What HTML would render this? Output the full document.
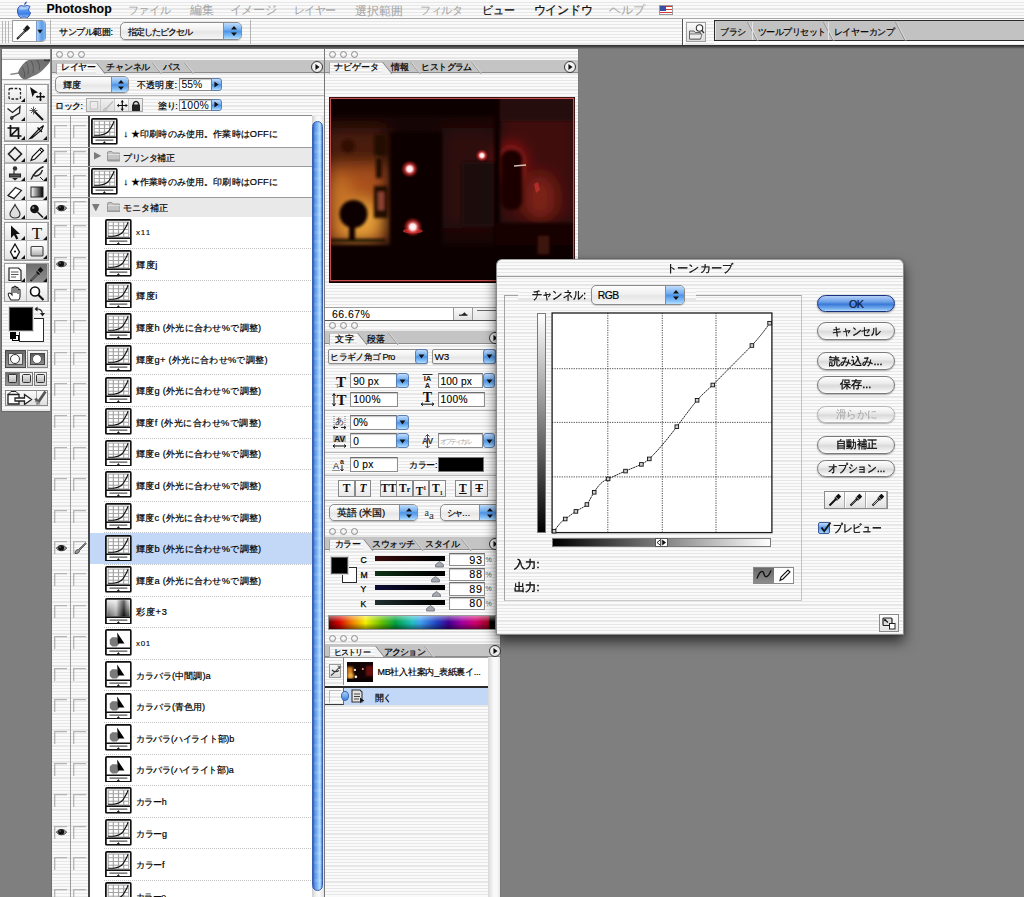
<!DOCTYPE html><html lang="ja"><head><meta charset="utf-8"><style>
*{margin:0;padding:0;box-sizing:border-box}
html,body{width:1024px;height:897px;overflow:hidden;background:#7f7f7f;font-family:"Liberation Sans",sans-serif;color:#000}
.ab{position:absolute}
.pin{background:repeating-linear-gradient(to bottom,#fafafa 0px,#fafafa 2px,#e7e7e7 2px,#e7e7e7 3.2px)}
.t{position:absolute;white-space:nowrap}
.tabs{position:absolute;background:#c4c4c4;border-bottom:1px solid #8c8c8c;overflow:hidden}
.circ{position:absolute;width:7.2px;height:7.2px;border:1.4px solid #8e8e8e;border-radius:50%;background:radial-gradient(circle at 50% 35%,#fff,#dcdcdc)}
.fld{position:absolute;background:#fff;border:1px solid #8e8e8e;border-top-color:#6e6e6e;box-shadow:inset 0 1px 1px #c8c8c8}
.pop{position:absolute;background:linear-gradient(#fdfdfd,#f0f0f0 45%,#e6e6e6 55%,#f6f6f6);border:1px solid #8c8c8c;border-radius:4px;overflow:hidden;box-shadow:0 1px 1px rgba(0,0,0,.18)}
.ar{position:absolute;right:0;top:0;bottom:0;background:linear-gradient(#c0dcfc,#76b0f0 40%,#4d94e6 52%,#8ac4fa 85%,#b8e0ff);border-left:1px solid #6a8fc5}
.ar2{position:absolute;background:linear-gradient(#c0dcfc,#76b0f0 40%,#4d94e6 52%,#8ac4fa 85%,#b8e0ff);border:1px solid #5a7fb5;border-radius:0 3px 3px 0}
.btn{position:absolute;border:1px solid #7a7a7a;border-radius:9px;background:linear-gradient(#fefefe,#ececec 40%,#dadada 55%,#f0f0f0 85%,#fff);box-shadow:0 1px 1.5px rgba(0,0,0,.3)}
.sb{position:absolute;border:1px solid #8a8a8a;background:linear-gradient(#fff,#e8e8e8);font-family:"Liberation Serif",serif;font-weight:bold;text-align:center;color:#111}
</style></head><body>
<svg width="0" height="0" style="position:absolute"><defs>
<symbol id="thC" viewBox="0 0 27 27"><rect x="0.9" y="0.9" width="25.2" height="25.2" rx="1" fill="#fff" stroke="#111" stroke-width="1.8"/>
<rect x="2.6" y="2.6" width="21.8" height="16.2" fill="#a4a4a4"/>
<g fill="#fff"><rect x="3.80" y="3.60" width="4" height="2.7"/><rect x="3.80" y="7.35" width="4" height="2.7"/><rect x="3.80" y="11.10" width="4" height="2.7"/><rect x="3.80" y="14.85" width="4" height="2.7"/><rect x="9.00" y="3.60" width="4" height="2.7"/><rect x="9.00" y="7.35" width="4" height="2.7"/><rect x="9.00" y="11.10" width="4" height="2.7"/><rect x="9.00" y="14.85" width="4" height="2.7"/><rect x="14.20" y="3.60" width="4" height="2.7"/><rect x="14.20" y="7.35" width="4" height="2.7"/><rect x="14.20" y="11.10" width="4" height="2.7"/><rect x="14.20" y="14.85" width="4" height="2.7"/><rect x="19.40" y="3.60" width="4" height="2.7"/><rect x="19.40" y="7.35" width="4" height="2.7"/><rect x="19.40" y="11.10" width="4" height="2.7"/><rect x="19.40" y="14.85" width="4" height="2.7"/></g>
<path d="M3.2 17.4 H8.5 C12 17 15.5 16.5 18 13 C20 10 22 7 23.2 3.3" stroke="#111" stroke-width="1.1" fill="none"/>
<path d="M1 19.5 H26" stroke="#111" stroke-width="1.5"/>
<path d="M4.5 22.2 H22.5" stroke="#555" stroke-width="1.2"/><path d="M11.8 25.4 L13.5 23.2 L15.2 25.4z" fill="#222"/></symbol>
<symbol id="thB" viewBox="0 0 27 27"><rect x="0.9" y="0.9" width="25.2" height="25.2" rx="1" fill="#fff" stroke="#111" stroke-width="1.8"/>
<path d="M7.2 8.2 L11.8 8.2 L14.2 10.6 L14.2 15.2 L11.8 17.6 L7.2 17.6 L4.8 15.2 L4.8 10.6z" fill="#7a7a7a"/><path d="M12.2 3.6 L19.6 14.6 L13 14.6z" fill="#000"/>
<path d="M1 19.5 H26" stroke="#111" stroke-width="1.5"/>
<path d="M4.5 22.2 H22.5" stroke="#555" stroke-width="1.2"/><path d="M11.8 25.4 L13.5 23.2 L15.2 25.4z" fill="#222"/></symbol>
<symbol id="thH" viewBox="0 0 27 27"><defs><linearGradient id="hg1" x1="0" y1="0" x2="0" y2="1"><stop offset="0" stop-color="#e0e0e0"/><stop offset="0.45" stop-color="#8a8a8a"/><stop offset="1" stop-color="#101010"/></linearGradient><linearGradient id="hg2" x1="0" y1="0" x2="1" y2="0"><stop offset="0" stop-color="#fff" stop-opacity=".3"/><stop offset=".4" stop-color="#fff" stop-opacity=".6"/><stop offset=".75" stop-color="#000" stop-opacity=".55"/><stop offset="1" stop-color="#fff" stop-opacity=".2"/></linearGradient></defs>
<rect x="0.9" y="0.9" width="25.2" height="25.2" rx="1" fill="#fff" stroke="#111" stroke-width="1.8"/>
<rect x="2.2" y="2.2" width="22.6" height="16.5" fill="url(#hg1)"/><rect x="2.2" y="2.2" width="22.6" height="16.5" fill="url(#hg2)"/>
<path d="M1 19.5 H26" stroke="#111" stroke-width="1.5"/>
<path d="M4.5 22.2 H22.5" stroke="#555" stroke-width="1.2"/><path d="M11.8 25.4 L13.5 23.2 L15.2 25.4z" fill="#222"/></symbol>
<symbol id="eye" viewBox="0 0 12 8"><path d="M0.4 4.2 C3 0.2 9 0.2 11.6 4.2 C9 8 3 8 0.4 4.2z" fill="#9a9a9a" stroke="#333" stroke-width="0.9"/><ellipse cx="5.6" cy="3.9" rx="3.3" ry="2.8" fill="#111"/><circle cx="4.4" cy="3" r="0.8" fill="#888"/></symbol>
<symbol id="lmk" viewBox="0 0 13 13"><path d="M0.7 13 V0.7 H13" stroke="#b4b4b4" stroke-width="1.3" fill="none"/></symbol>
<symbol id="fold" viewBox="0 0 14 11"><path d="M0.5 2 Q0.5 0.5 2 0.5 H5 L6.5 2 H12.5 Q13.5 2 13.5 3 V9.5 Q13.5 10.5 12.5 10.5 H1.5 Q0.5 10.5 0.5 9.5z" fill="#c4c4c4" stroke="#858585" stroke-width="0.8"/><path d="M0.8 3.6 H13.2" stroke="#e8e8e8" stroke-width="0.8"/><path d="M0.8 9.4 H13.2" stroke="#909090" stroke-width="1.2"/></symbol>
<symbol id="ud" viewBox="0 0 8 12"><path d="M1 4.6 L4 1 L7 4.6z M1 7.4 L4 11 L7 7.4z" fill="#111"/></symbol>
<symbol id="dn" viewBox="0 0 8 6"><path d="M0.5 0.5 L7.5 0.5 L4 5.5z" fill="#111"/></symbol>
<symbol id="rt" viewBox="0 0 6 7"><path d="M0.5 0 L5.5 3.5 L0.5 7z" fill="#111"/></symbol>
</defs></svg>
<div class="ab pin" style="left:0;top:0;width:1024px;height:19px"></div>
<div class="ab" style="left:0;top:18.2px;width:1024px;height:1px;background:#a8a8a8"></div>
<svg class="ab" style="left:16.5px;top:0.5px" width="14" height="17.5" viewBox="0 0 14 17.5"><defs><linearGradient id="ap" x1="0" y1="0" x2="0" y2="1"><stop offset="0" stop-color="#c0dcff"/><stop offset="0.4" stop-color="#5a9af0"/><stop offset="0.7" stop-color="#3a7ee6"/><stop offset="1" stop-color="#9ccaff"/></linearGradient></defs><path d="M9.6 0.6 C10.2 0.8 9.2 3.6 7.3 4.2 C7 3 8 1 9.6 0.6z" fill="#2a4eb0"/><path d="M7 5.2 C8 5.2 9 4.4 10.5 4.5 C11.6 4.6 12.5 5 13.2 6 C11 7.4 11.3 10.6 13.6 11.6 C13 13.6 11.5 16.6 10 16.6 C9 16.6 8.5 16 7 16 C5.5 16 5 16.6 4 16.6 C2.2 16.6 0.5 12.8 0.5 10 C0.5 7 2.3 4.6 4.2 4.6 C5.3 4.6 6 5.2 7 5.2z" fill="url(#ap)" stroke="#2244a8" stroke-width="0.9"/><path d="M2.2 8.5 C3 6.5 5 6 7 6.5 C9 7 10.5 6.5 11.5 6.8 C10.5 8.5 6 9 2.2 8.5z" fill="#fff" opacity="0.35"/></svg>
<div class="t" style="left:46.5px;top:2px;font-size:12.3px;line-height:15px;-webkit-text-stroke:0.1px currentColor;letter-spacing:0.12px;font-weight:bold">Photoshop</div>
<div class="t" style="left:127.5px;top:2.5px;font-size:11.43px;line-height:15px;-webkit-text-stroke:0.05px currentColor;letter-spacing:-0.23px;color:#a4a4a4">ファイル</div>
<div class="t" style="left:190.3px;top:2.5px;font-size:11.53px;line-height:15px;-webkit-text-stroke:0.05px currentColor;letter-spacing:-0.16px;color:#a4a4a4">編集</div>
<div class="t" style="left:229.5px;top:2.5px;font-size:11.58px;line-height:15px;-webkit-text-stroke:0.05px currentColor;letter-spacing:-0.04px;color:#a4a4a4">イメージ</div>
<div class="t" style="left:293.5px;top:2.5px;font-size:11.31px;line-height:15px;-webkit-text-stroke:0.05px currentColor;letter-spacing:-0.40px;color:#a4a4a4">レイヤー</div>
<div class="t" style="left:354.9px;top:2.5px;font-size:11.6px;line-height:15px;-webkit-text-stroke:0.05px currentColor;letter-spacing:0.20px;color:#a4a4a4">選択範囲</div>
<div class="t" style="left:419.8px;top:2.5px;font-size:11.39px;line-height:15px;-webkit-text-stroke:0.05px currentColor;letter-spacing:-0.28px;color:#a4a4a4">フィルタ</div>
<div class="t" style="left:482.4px;top:2.5px;font-size:11.42px;line-height:15px;-webkit-text-stroke:0.25px currentColor;letter-spacing:-0.27px;color:#111">ビュー</div>
<div class="t" style="left:533.5px;top:2.5px;font-size:11.5px;line-height:15px;-webkit-text-stroke:0.25px currentColor;letter-spacing:-0.12px;color:#111">ウインドウ</div>
<div class="t" style="left:608.8px;top:2.5px;font-size:11.55px;line-height:15px;-webkit-text-stroke:0.05px currentColor;letter-spacing:-0.07px;color:#a4a4a4">ヘルプ</div>
<div class="ab" style="left:658.5px;top:4.8px;width:14px;height:10.5px;background:repeating-linear-gradient(#d43a3a 0,#d43a3a 1.5px,#fff 1.5px,#fff 3px);border:0.5px solid #999"><div class="ab" style="left:0;top:0;width:6.5px;height:5.5px;background:#3a4ea8"></div></div>
<div class="ab pin" style="left:0;top:19.2px;width:1024px;height:25.5px"></div>
<div class="ab" style="left:0;top:44.5px;width:1024px;height:4.5px;background:linear-gradient(#2a2a2a,#4a4a4a 45%,#6a6a6a 80%,#7f7f7f)"></div>
<div class="ab" style="left:2px;top:21px;width:8px;height:22px;background:repeating-linear-gradient(to right,#b8b8b8 0,#b8b8b8 1px,transparent 1px,transparent 3px)"></div>
<div class="ab" style="left:12px;top:19.8px;width:34px;height:22.6px;background:#fff;border:1px solid #9a9a9a;border-radius:0 4px 4px 0"></div>
<div class="ab" style="left:35.5px;top:20.8px;width:9.5px;height:20.6px;background:linear-gradient(to right,#a8d0fa,#5e9ce8 60%,#7ab4f4);border-radius:0 3px 3px 0;border-left:1px solid #7a9ccc"></div>
<svg class="ab" style="left:37px;top:28.5px" width="6" height="5"><use href="#dn"/></svg>
<svg class="ab" style="left:15px;top:22.5px" width="17" height="17" viewBox="0 0 17 17"><path d="M2.5 15.5 L10.5 7.5" stroke="#1a1a1a" stroke-width="1.8" stroke-linecap="round"/><path d="M3.4 14.4 L9.8 8" stroke="#e8e8e8" stroke-width="0.6"/><path d="M9.2 5.2 L12.2 2 L15.2 5 L12 8.2z" fill="#1a1a1a"/><path d="M8.5 6 L11.2 8.8" stroke="#1a1a1a" stroke-width="1.4"/></svg>
<div class="ab" style="left:50.3px;top:20px;width:1px;height:24px;background:#b4b4b4"></div>
<div class="t" style="left:59.2px;top:25.5px;font-size:9.19px;line-height:12px;-webkit-text-stroke:0.2px currentColor;letter-spacing:-0.43px;">サンプル範囲:</div>
<div class="pop" style="left:119.9px;top:22.3px;width:122.5px;height:17.6px;border-radius:5px"><div class="ar" style="width:18px"></div></div>
<svg class="ab" style="left:229.5px;top:25px" width="8" height="12"><use href="#ud"/></svg>
<div class="t" style="left:127.5px;top:25.5px;font-size:8.85px;line-height:12px;-webkit-text-stroke:0.2px currentColor;letter-spacing:-0.88px;">指定したピクセル</div>
<div class="ab" style="left:250px;top:20px;width:1px;height:24px;background:#b4b4b4"></div>
<div class="ab" style="left:682px;top:19.2px;width:1px;height:25.5px;background:#505050"></div>
<div class="ab" style="left:683px;top:19.2px;width:1.5px;height:25.5px;background:#fcfcfc"></div>
<div class="ab" style="left:686px;top:21.8px;width:19.5px;height:20.5px;background:linear-gradient(#fafafa,#dcdcdc);border:1px solid #a0a0a0"></div>
<svg class="ab" style="left:687.5px;top:23px" width="17" height="18" viewBox="0 0 17 18"><path d="M1.5 8 H6 L7.2 9.5 H12.5 V16 H1.5z" fill="#d8d8d8" stroke="#555" stroke-width="0.9"/><path d="M1.5 11 H14 L12.5 16 H1.5z" fill="#eee" stroke="#555" stroke-width="0.8"/><circle cx="11.5" cy="5" r="3.2" fill="#fff" stroke="#333" stroke-width="1.1"/><path d="M13.6 7.3 L16 10" stroke="#333" stroke-width="1.4"/></svg>
<div class="ab" style="left:713.5px;top:20.2px;width:311px;height:21px;background:#c2c2c2;border-top:1.2px solid #2a2a2a;border-left:1.2px solid #2a2a2a;border-bottom:1.2px solid #2a2a2a"></div>
<div class="ab" style="left:713.5px;top:41.2px;width:311px;height:3.3px;background:#fcfcfc"></div>
<svg class="ab" style="left:747px;top:22px" width="12" height="19"><path d="M0.5 0 L10 18.5" stroke="#8a8a8a" stroke-width="1"/><path d="M1.5 0 L11 18.5" stroke="#e0e0e0" stroke-width="0.8"/></svg>
<div class="t" style="left:719.6px;top:25.5px;font-size:9.15px;line-height:12px;-webkit-text-stroke:0.2px currentColor;letter-spacing:-0.08px;">ブラシ</div>
<svg class="ab" style="left:822.8px;top:22px" width="12" height="19"><path d="M0.5 0 L10 18.5" stroke="#8a8a8a" stroke-width="1"/><path d="M1.5 0 L11 18.5" stroke="#e0e0e0" stroke-width="0.8"/></svg>
<div class="t" style="left:758px;top:25.5px;font-size:8.66px;line-height:12px;-webkit-text-stroke:0.2px currentColor;letter-spacing:-0.57px;">ツールプリセット</div>
<svg class="ab" style="left:895px;top:22px" width="12" height="19"><path d="M0.5 0 L10 18.5" stroke="#8a8a8a" stroke-width="1"/><path d="M1.5 0 L11 18.5" stroke="#e0e0e0" stroke-width="0.8"/></svg>
<div class="t" style="left:833.8px;top:25.5px;font-size:8.93px;line-height:12px;-webkit-text-stroke:0.2px currentColor;letter-spacing:-0.31px;">レイヤーカンプ</div>
<div class="ab" style="left:715px;top:22px;width:1px;height:18px;background:#e4e4e4"></div>
<div class="ab" style="left:752px;top:22px;width:1px;height:18px;background:#e4e4e4"></div>
<div class="ab" style="left:828px;top:22px;width:1px;height:18px;background:#e4e4e4"></div>
<div class="ab pin" style="left:1.2px;top:49px;width:49.6px;height:363px;border-left:1px solid #6a6a6a;border-right:1px solid #8a8a8a;border-bottom:1px solid #6a6a6a"></div>
<div class="ab" style="left:2.2px;top:59px;width:47.6px;height:21px;background:#fff;border-top:1px solid #b0b0b0;border-bottom:1px solid #b0b0b0"></div>
<svg class="ab" style="left:0px;top:55px" width="52" height="27" viewBox="0 0 52 27"><defs><linearGradient id="fth" x1="0" y1="1" x2="1" y2="0"><stop offset="0" stop-color="#6a6a6a"/><stop offset="0.5" stop-color="#7a7a7a"/><stop offset="1" stop-color="#6a6a6a"/></linearGradient><filter id="fb"><feGaussianBlur stdDeviation="0.35"/></filter></defs>
<g filter="url(#fb)"><path d="M11 19.2 L19.5 18" stroke="#8a8a8a" stroke-width="1.6" stroke-linecap="round"/>
<path d="M18 17.5 C20 12 24 7 28.4 5 C36 4 44 4.5 50.2 4.5 L50.2 6 C49 8 48.5 9.5 47.7 9.8 C45 13 42 16 39.6 17.8 C36 20 34 21 31.5 21.8 C29 23 27 24.5 24.9 24.4 C22 24 20 22 18 17.5z" fill="url(#fth)"/>
<path d="M26 7 C28 10 29 14 28 19 M31 5.5 C33 9 34 13 33 18 M22 12 C24 15 25 18 24.5 22 M37 5 C39 8 40 11 39.5 15" stroke="#4a4a4a" stroke-width="1" fill="none" opacity="0.7"/>
<path d="M44 5 C47 6 49 5.5 50 5" stroke="#3a3a3a" stroke-width="1.5" fill="none"/></g></svg>
<div class="ab" style="left:4.3px;top:83.8px;width:44.400000000000006px;height:57.9px;border:1px solid #9c9c9c;background:#b4b4b4"></div>
<div class="ab" style="left:5.3px;top:84.8px;width:20.6px;height:17.9px;background:linear-gradient(#fdfdfd,#e6e6e6)"></div>
<div class="ab" style="left:26.900000000000002px;top:84.8px;width:20.6px;height:17.9px;background:linear-gradient(#fdfdfd,#e6e6e6)"></div>
<div class="ab" style="left:5.3px;top:103.69999999999999px;width:20.6px;height:17.9px;background:linear-gradient(#fdfdfd,#e6e6e6)"></div>
<div class="ab" style="left:26.900000000000002px;top:103.69999999999999px;width:20.6px;height:17.9px;background:linear-gradient(#fdfdfd,#e6e6e6)"></div>
<div class="ab" style="left:5.3px;top:122.6px;width:20.6px;height:17.9px;background:linear-gradient(#fdfdfd,#e6e6e6)"></div>
<div class="ab" style="left:26.900000000000002px;top:122.6px;width:20.6px;height:17.9px;background:linear-gradient(#fdfdfd,#e6e6e6)"></div>
<div class="ab" style="left:4.3px;top:143.6px;width:44.400000000000006px;height:76.8px;border:1px solid #9c9c9c;background:#b4b4b4"></div>
<div class="ab" style="left:5.3px;top:144.6px;width:20.6px;height:17.9px;background:linear-gradient(#fdfdfd,#e6e6e6)"></div>
<div class="ab" style="left:26.900000000000002px;top:144.6px;width:20.6px;height:17.9px;background:linear-gradient(#fdfdfd,#e6e6e6)"></div>
<div class="ab" style="left:5.3px;top:163.5px;width:20.6px;height:17.9px;background:linear-gradient(#fdfdfd,#e6e6e6)"></div>
<div class="ab" style="left:26.900000000000002px;top:163.5px;width:20.6px;height:17.9px;background:linear-gradient(#fdfdfd,#e6e6e6)"></div>
<div class="ab" style="left:5.3px;top:182.39999999999998px;width:20.6px;height:17.9px;background:linear-gradient(#fdfdfd,#e6e6e6)"></div>
<div class="ab" style="left:26.900000000000002px;top:182.39999999999998px;width:20.6px;height:17.9px;background:linear-gradient(#fdfdfd,#e6e6e6)"></div>
<div class="ab" style="left:5.3px;top:201.29999999999998px;width:20.6px;height:17.9px;background:linear-gradient(#fdfdfd,#e6e6e6)"></div>
<div class="ab" style="left:26.900000000000002px;top:201.29999999999998px;width:20.6px;height:17.9px;background:linear-gradient(#fdfdfd,#e6e6e6)"></div>
<div class="ab" style="left:4.3px;top:221.5px;width:44.400000000000006px;height:39.0px;border:1px solid #9c9c9c;background:#b4b4b4"></div>
<div class="ab" style="left:5.3px;top:222.5px;width:20.6px;height:17.9px;background:linear-gradient(#fdfdfd,#e6e6e6)"></div>
<div class="ab" style="left:26.900000000000002px;top:222.5px;width:20.6px;height:17.9px;background:linear-gradient(#fdfdfd,#e6e6e6)"></div>
<div class="ab" style="left:5.3px;top:241.4px;width:20.6px;height:17.9px;background:linear-gradient(#fdfdfd,#e6e6e6)"></div>
<div class="ab" style="left:26.900000000000002px;top:241.4px;width:20.6px;height:17.9px;background:linear-gradient(#fdfdfd,#e6e6e6)"></div>
<div class="ab" style="left:4.3px;top:263.4px;width:44.400000000000006px;height:39.0px;border:1px solid #9c9c9c;background:#b4b4b4"></div>
<div class="ab" style="left:5.3px;top:264.4px;width:20.6px;height:17.9px;background:linear-gradient(#fdfdfd,#e6e6e6)"></div>
<div class="ab" style="left:26.900000000000002px;top:264.4px;width:20.6px;height:17.9px;background:linear-gradient(#fdfdfd,#e6e6e6)"></div>
<div class="ab" style="left:5.3px;top:283.29999999999995px;width:20.6px;height:17.9px;background:linear-gradient(#fdfdfd,#e6e6e6)"></div>
<div class="ab" style="left:26.900000000000002px;top:283.29999999999995px;width:20.6px;height:17.9px;background:linear-gradient(#fdfdfd,#e6e6e6)"></div>
<div class="ab" style="left:26.3px;top:264.4px;width:20.6px;height:17.9px;background:linear-gradient(#6e6e6e,#8e8e8e)"></div>
<svg class="ab" style="left:21.400000000000002px;top:98.19999999999999px" width="4" height="4"><path d="M4 0 L4 4 L0 4z" fill="#111"/></svg>
<svg class="ab" style="left:21.400000000000002px;top:117.1px" width="4" height="4"><path d="M4 0 L4 4 L0 4z" fill="#111"/></svg>
<svg class="ab" style="left:21.400000000000002px;top:136.0px" width="4" height="4"><path d="M4 0 L4 4 L0 4z" fill="#111"/></svg>
<svg class="ab" style="left:43.0px;top:136.0px" width="4" height="4"><path d="M4 0 L4 4 L0 4z" fill="#111"/></svg>
<svg class="ab" style="left:21.400000000000002px;top:158.0px" width="4" height="4"><path d="M4 0 L4 4 L0 4z" fill="#111"/></svg>
<svg class="ab" style="left:43.0px;top:158.0px" width="4" height="4"><path d="M4 0 L4 4 L0 4z" fill="#111"/></svg>
<svg class="ab" style="left:21.400000000000002px;top:176.9px" width="4" height="4"><path d="M4 0 L4 4 L0 4z" fill="#111"/></svg>
<svg class="ab" style="left:43.0px;top:176.9px" width="4" height="4"><path d="M4 0 L4 4 L0 4z" fill="#111"/></svg>
<svg class="ab" style="left:21.400000000000002px;top:195.79999999999998px" width="4" height="4"><path d="M4 0 L4 4 L0 4z" fill="#111"/></svg>
<svg class="ab" style="left:43.0px;top:195.79999999999998px" width="4" height="4"><path d="M4 0 L4 4 L0 4z" fill="#111"/></svg>
<svg class="ab" style="left:21.400000000000002px;top:214.7px" width="4" height="4"><path d="M4 0 L4 4 L0 4z" fill="#111"/></svg>
<svg class="ab" style="left:43.0px;top:214.7px" width="4" height="4"><path d="M4 0 L4 4 L0 4z" fill="#111"/></svg>
<svg class="ab" style="left:21.400000000000002px;top:235.9px" width="4" height="4"><path d="M4 0 L4 4 L0 4z" fill="#111"/></svg>
<svg class="ab" style="left:43.0px;top:235.9px" width="4" height="4"><path d="M4 0 L4 4 L0 4z" fill="#111"/></svg>
<svg class="ab" style="left:21.400000000000002px;top:254.8px" width="4" height="4"><path d="M4 0 L4 4 L0 4z" fill="#111"/></svg>
<svg class="ab" style="left:43.0px;top:254.8px" width="4" height="4"><path d="M4 0 L4 4 L0 4z" fill="#111"/></svg>
<svg class="ab" style="left:21.400000000000002px;top:277.79999999999995px" width="4" height="4"><path d="M4 0 L4 4 L0 4z" fill="#111"/></svg>
<svg class="ab" style="left:43.0px;top:277.79999999999995px" width="4" height="4"><path d="M4 0 L4 4 L0 4z" fill="#111"/></svg>
<svg class="ab" style="left:6.2px;top:86.3px" width="18" height="16" viewBox="0 0 18 16"><rect x="3" y="2.5" width="11.5" height="10.5" rx="1.5" fill="none" stroke="#222" stroke-width="1.3" stroke-dasharray="2.6 1.6"/></svg>
<svg class="ab" style="left:27.8px;top:86.3px" width="18" height="16" viewBox="0 0 18 16"><path d="M2 1 L10 6.5 L6.5 7.3 L4.5 11z" fill="#111"/><path d="M12.5 6.5 V15 M8.3 10.8 H16.7" stroke="#111" stroke-width="1.4"/><path d="M11 8 L12.5 6.3 L14 8 M11 13.5 L12.5 15.2 L14 13.5 M9.8 9.3 L8.1 10.8 L9.8 12.3 M15.2 9.3 L16.9 10.8 L15.2 12.3" fill="#111"/></svg>
<svg class="ab" style="left:6.2px;top:105.19999999999999px" width="18" height="16" viewBox="0 0 18 16"><path d="M1.5 3.5 L6.5 7.5 L14 1.5 L13.5 8 L6 12.5 L5.5 15" fill="none" stroke="#222" stroke-width="1.3"/><circle cx="5.8" cy="12.8" r="1.4" fill="none" stroke="#222" stroke-width="1"/></svg>
<svg class="ab" style="left:27.8px;top:105.19999999999999px" width="18" height="16" viewBox="0 0 18 16"><path d="M6.5 6.5 L15 15" stroke="#111" stroke-width="2"/><path d="M3 3 L8 8 M8 3 L3 8 M5.5 1.5 V9.5 M1.5 5.5 H9.5" stroke="#333" stroke-width="0.8"/></svg>
<svg class="ab" style="left:6.2px;top:124.1px" width="18" height="16" viewBox="0 0 18 16"><path d="M4.5 1 V12 H15.5 M1.5 4 H12.5 V15 M4.5 12 L12.5 4" fill="none" stroke="#111" stroke-width="1.7"/></svg>
<svg class="ab" style="left:27.8px;top:124.1px" width="18" height="16" viewBox="0 0 18 16"><path d="M2 14.5 L11 5 L15.5 1.5 L13.5 6 L4 14z" fill="#fff" stroke="#111" stroke-width="1.2"/><path d="M9.5 3.5 L14 8" stroke="#111" stroke-width="1.2"/></svg>
<svg class="ab" style="left:6.2px;top:146.1px" width="18" height="16" viewBox="0 0 18 16"><path d="M9 1.5 L15.5 8 L9 14.5 L2.5 8z" fill="#eee" stroke="#222" stroke-width="1.6"/></svg>
<svg class="ab" style="left:27.8px;top:146.1px" width="18" height="16" viewBox="0 0 18 16"><path d="M3 14.5 L4.5 10.5 L13 2 L15.5 4.5 L7 13z" fill="#fff" stroke="#111" stroke-width="1.2"/><path d="M11.5 3.5 L14 6" stroke="#111"/></svg>
<svg class="ab" style="left:6.2px;top:165.0px" width="18" height="16" viewBox="0 0 18 16"><circle cx="9" cy="3.5" r="2.2" fill="#333"/><path d="M8 5.5 V8.5 M3.5 9 H14.5 V12 H3.5z" fill="#555" stroke="#222" stroke-width="1.1"/><path d="M6 13 L9 15.5 L12 13z" fill="#222"/></svg>
<svg class="ab" style="left:27.8px;top:165.0px" width="18" height="16" viewBox="0 0 18 16"><path d="M3 14.5 C6 8 10 4 15.5 1.5 M4.5 10 C9 12.5 13 9.5 14.5 5" fill="none" stroke="#222" stroke-width="1.4"/><path d="M12 12 L15 15" stroke="#222" stroke-width="1"/></svg>
<svg class="ab" style="left:6.2px;top:183.89999999999998px" width="18" height="16" viewBox="0 0 18 16"><path d="M2 11.5 L9.5 3.5 L15.5 6.5 L8 14.5z" fill="#fff" stroke="#222" stroke-width="1.2"/><path d="M2 11.5 L8 14.5 L8 15.5" fill="none" stroke="#222"/></svg>
<svg class="ab" style="left:27.8px;top:183.89999999999998px" width="18" height="16" viewBox="0 0 18 16"><defs><linearGradient id="gr1"><stop offset="0" stop-color="#fff"/><stop offset="1" stop-color="#000"/></linearGradient></defs><rect x="3" y="3" width="12" height="10" fill="url(#gr1)" stroke="#222" stroke-width="1"/></svg>
<svg class="ab" style="left:6.2px;top:202.79999999999998px" width="18" height="16" viewBox="0 0 18 16"><path d="M9 1.5 C11 6 14 8 14 11 C14 13.5 12 15 9 15 C6 15 4 13.5 4 11 C4 8 7 6 9 1.5z" fill="#ddd" stroke="#333" stroke-width="1.1"/></svg>
<svg class="ab" style="left:27.8px;top:202.79999999999998px" width="18" height="16" viewBox="0 0 18 16"><circle cx="6.5" cy="6" r="4.3" fill="#111"/><circle cx="5.2" cy="4.8" r="1.2" fill="#888"/><path d="M9.5 9 L15 14.5" stroke="#111" stroke-width="1.5"/></svg>
<svg class="ab" style="left:6.2px;top:224.0px" width="18" height="16" viewBox="0 0 18 16"><path d="M5 1.5 L5 14 L8 11 L10.3 15.5 L12.3 14.5 L10 10 L14 10z" fill="#111"/></svg>
<svg class="ab" style="left:27.8px;top:224.0px" width="18" height="16" viewBox="0 0 18 16"><text x="9" y="14.5" font-family="Liberation Serif" font-size="17" text-anchor="middle" fill="#111">T</text></svg>
<svg class="ab" style="left:6.2px;top:242.9px" width="18" height="16" viewBox="0 0 18 16"><path d="M9 1 L13.5 9 L10.5 14.5 H7.5 L4.5 9z" fill="#fff" stroke="#111" stroke-width="1.3"/><circle cx="9" cy="8.5" r="1.1" fill="#111"/><path d="M7 14.5 H11 V16 H7z" fill="#111"/></svg>
<svg class="ab" style="left:27.8px;top:242.9px" width="18" height="16" viewBox="0 0 18 16"><defs><linearGradient id="rg1" x1="0" y1="0" x2="0" y2="1"><stop offset="0" stop-color="#fff"/><stop offset="1" stop-color="#aaa"/></linearGradient></defs><rect x="3" y="3.5" width="12" height="9.5" rx="1" fill="url(#rg1)" stroke="#444" stroke-width="1.1"/></svg>
<svg class="ab" style="left:6.2px;top:265.9px" width="18" height="16" viewBox="0 0 18 16"><path d="M3 2 H12.5 L15 4.5 V14.5 H3z" fill="#fff" stroke="#222" stroke-width="1.2"/><path d="M5 6 H12.5 M5 8.5 H12.5 M5 11 H10" stroke="#555" stroke-width="1"/></svg>
<svg class="ab" style="left:27.8px;top:265.9px" width="18" height="16" viewBox="0 0 18 16"><path d="M2.5 15 L10.5 7" stroke="#111" stroke-width="1.8"/><path d="M3.3 14.2 L9.8 7.7" stroke="#fff" stroke-width="0.6"/><path d="M9.5 4 L12.5 1 L15.5 4 L12.5 7z" fill="#111"/><path d="M8.5 5.5 L11.5 8.5" stroke="#111" stroke-width="1.4"/></svg>
<svg class="ab" style="left:6.2px;top:284.79999999999995px" width="18" height="16" viewBox="0 0 18 16"><path d="M5 15 C3 12 1.5 9.5 2.5 8.3 C3.5 7.3 5 8.8 6 10 V3.2 C6 2 8 2 8 3.2 V8 V2.2 C8 1 10 1 10 2.2 V8 V3 C10 2 12 2 12 3 V9 V5 C12 4 14 4 14 5 V11 C14 13 13 15 12 15z" fill="#fff" stroke="#222" stroke-width="1.1"/></svg>
<svg class="ab" style="left:27.8px;top:284.79999999999995px" width="18" height="16" viewBox="0 0 18 16"><circle cx="7" cy="6.5" r="4.5" fill="#fff" stroke="#111" stroke-width="1.6"/><path d="M10.2 9.8 L15.5 15" stroke="#111" stroke-width="2.2"/></svg>
<div class="ab" style="left:19px;top:318px;width:25px;height:24px;background:#fff;border:1.2px solid #2a2a2a"></div>
<div class="ab" style="left:8.5px;top:307px;width:24px;height:23.5px;background:#000;border:1.5px solid #5a5a5a;box-shadow:0 0 0 1px #e0e0e0"></div>
<div class="ab" style="left:12px;top:334.5px;width:6.5px;height:6.5px;border:1px solid #000;background:#fff"></div><div class="ab" style="left:9.5px;top:332px;width:6.5px;height:6.5px;background:#000"></div>
<svg class="ab" style="left:34px;top:306px" width="11" height="11"><path d="M2.5 3 Q8 2.5 8.5 8" fill="none" stroke="#222" stroke-width="1.1"/><path d="M0.5 3 L3.5 0.5 L3.5 5.5z M8.5 10.5 L6 7 L11 7z" fill="#222"/></svg>
<div class="ab" style="left:5px;top:350px;width:20.5px;height:17.5px;background:linear-gradient(#6a6a6a,#9a9a9a);border:1px solid #4a4a4a"></div><div class="ab" style="left:7.5px;top:352.5px;width:15.5px;height:12.5px;background:linear-gradient(#f4f4f4,#d8d8d8);border:1px solid #555"></div><div class="ab" style="left:10.3px;top:353.5px;width:10px;height:10px;border-radius:50%;background:#fff;border:1.2px solid #333"></div>
<div class="ab" style="left:27px;top:350px;width:20.5px;height:17.5px;background:linear-gradient(#f4f4f4,#d4d4d4);border:1px solid #8a8a8a"></div><div class="ab" style="left:29.5px;top:352.5px;width:15.5px;height:12.5px;background:linear-gradient(#5a5a5a,#8a8a8a);border:1px solid #444"></div><div class="ab" style="left:32.3px;top:353.5px;width:10px;height:10px;border-radius:50%;background:#fff;border:1px solid #555"></div>
<div class="ab" style="left:5px;top:371.5px;width:13.8px;height:14px;background:linear-gradient(#6a6a6a,#9a9a9a);border:1px solid #7a7a7a"></div><div class="ab" style="left:7.5px;top:374.3px;width:9px;height:8.5px;border:1px solid #333;background:linear-gradient(#e8e8e8,#bbb);border-radius:1.5px"></div>
<div class="ab" style="left:19.3px;top:371.5px;width:13.8px;height:14px;background:linear-gradient(#f6f6f6,#d4d4d4);border:1px solid #7a7a7a"></div><div class="ab" style="left:21.8px;top:374.3px;width:9px;height:8.5px;border:1px solid #333;background:linear-gradient(#e8e8e8,#bbb);border-radius:1.5px"></div>
<div class="ab" style="left:33.6px;top:371.5px;width:13.8px;height:14px;background:linear-gradient(#f6f6f6,#d4d4d4);border:1px solid #7a7a7a"></div><div class="ab" style="left:36.1px;top:374.3px;width:9px;height:8.5px;border:1px solid #333;background:linear-gradient(#e8e8e8,#bbb);border-radius:1.5px"></div>
<div class="ab" style="left:5px;top:389.5px;width:42.5px;height:16px;background:linear-gradient(#fafafa,#e0e0e0);border:1px solid #8a8a8a"></div>
<div class="ab" style="left:35.5px;top:390.5px;width:1px;height:14px;background:#aaa"></div>
<svg class="ab" style="left:7px;top:390px" width="40" height="15" viewBox="0 0 40 15"><path d="M1 4.5 H12 V14 H1z" fill="#fff" stroke="#222" stroke-width="1.3"/><path d="M1 4.5 L4 1.5 H9 L12 4.5" fill="none" stroke="#222" stroke-width="1"/><path d="M8 8 H17.5 V4.5 L24.5 9.5 L17.5 14.5 V11 H8z" fill="#fff" stroke="#222" stroke-width="1.3"/><path d="M28.5 8.5 L31 12.5 L38.5 1.5" fill="none" stroke="#555" stroke-width="2.8"/><path d="M28 11 L33 14" stroke="#999" stroke-width="1.5"/></svg>
<div class="ab pin" style="left:51px;top:49px;width:274px;height:848px;border-left:1px solid #6e6e6e"></div>
<div class="ab" style="left:323.8px;top:49px;width:1.6px;height:848px;background:#767676"></div>
<div class="circ" style="left:55.5px;top:50.8px"></div>
<div class="circ" style="left:66.7px;top:50.8px"></div>
<div class="circ" style="left:77.9px;top:50.8px"></div>
<div class="ab" style="left:52px;top:60px;width:272.4px;height:1px;background:#a6a6a6"></div>
<div class="tabs" style="left:52px;top:60.4px;width:272.4px;height:12.6px"></div>
<div class="ab pin" style="left:55.5px;top:62.699999999999996px;width:41.0px;height:11.299999999999999px;border-left:1px solid #a8a8a8;border-top:1px solid #c8c8c8"></div>
<svg class="ab" style="left:96.0px;top:62.699999999999996px" width="11.072" height="11.299999999999999"><path d="M0 0 L9.072 11.299999999999999 L0 11.299999999999999z" fill="#f2f2f2"/><path d="M0.5 0 L9.572 11.299999999999999" stroke="#8a8a8a" stroke-width="1"/></svg>
<div class="t" style="left:61px;top:62.1px;font-size:8.81px;line-height:11.6px;-webkit-text-stroke:0.22px currentColor;letter-spacing:-0.49px;">レイヤー</div>
<svg class="ab" style="left:152.0px;top:62.699999999999996px" width="11.072" height="11.299999999999999"><path d="M0.5 0 L9.572 11.299999999999999" stroke="#9a9a9a" stroke-width="1"/><path d="M1.5 0 L10.572 11.299999999999999" stroke="#dedede" stroke-width="0.8"/></svg>
<div class="t" style="left:106px;top:62.1px;font-size:9.08px;line-height:11.6px;-webkit-text-stroke:0.22px currentColor;letter-spacing:-0.15px;">チャンネル</div>
<svg class="ab" style="left:183.5px;top:62.699999999999996px" width="11.072" height="11.299999999999999"><path d="M0.5 0 L9.572 11.299999999999999" stroke="#9a9a9a" stroke-width="1"/><path d="M1.5 0 L10.572 11.299999999999999" stroke="#dedede" stroke-width="0.8"/></svg>
<div class="t" style="left:162.7px;top:62.1px;font-size:9.2px;line-height:11.6px;-webkit-text-stroke:0.22px currentColor;letter-spacing:0.80px;">パス</div>
<div class="ab" style="left:310.5px;top:60.900000000000006px;width:12.5px;height:12.5px;border-radius:50%;background:radial-gradient(circle at 50% 40%,#fff,#dedede);border:1.3px solid #3a3a3a"></div>
<svg class="ab" style="left:314.9px;top:63.900000000000006px" width="5" height="6"><use href="#rt"/></svg>
<div class="pop" style="left:55.3px;top:76.2px;width:74.2px;height:17.2px;border-radius:5px"><div class="ar" style="width:17.6px"></div></div>
<svg class="ab" style="left:117px;top:79px" width="8" height="12"><use href="#ud"/></svg>
<div class="t" style="left:62.5px;top:79px;font-size:9.4px;line-height:12px;-webkit-text-stroke:0.2px currentColor;letter-spacing:0.80px;">輝度</div>
<div class="t" style="left:136.5px;top:79px;font-size:9.4px;line-height:12px;-webkit-text-stroke:0.2px currentColor;letter-spacing:0.47px;">不透明度:</div>
<div class="fld" style="left:179.2px;top:77.9px;width:32.5px;height:12.8px"></div>
<div class="t" style="left:181.5px;top:78px;font-size:10.4px;line-height:13px;-webkit-text-stroke:0.03px currentColor;letter-spacing:0.00px;">55%</div>
<div class="ar2" style="left:211.2px;top:77.9px;width:10.7px;height:12.8px"></div><svg class="ab" style="left:214.3px;top:80.8px" width="5" height="7"><use href="#rt"/></svg>
<div class="ab" style="left:52px;top:94.6px;width:272.4px;height:1px;background:#b6b6b6"></div>
<div class="t" style="left:55.3px;top:99.5px;font-size:8.77px;line-height:12px;-webkit-text-stroke:0.2px currentColor;letter-spacing:-0.61px;">ロック:</div>
<div class="ab" style="left:86px;top:98.1px;width:56.8px;height:14.1px;background:#c8c8c8;border:1px solid #a8a8a8"></div>
<div class="ab" style="left:86.8px;top:98.9px;width:13.3px;height:12.5px;background:linear-gradient(#f0f0f0,#dedede)"></div>
<div class="ab" style="left:100.89999999999999px;top:98.9px;width:13.3px;height:12.5px;background:linear-gradient(#f0f0f0,#dedede)"></div>
<div class="ab" style="left:115.0px;top:98.9px;width:13.3px;height:12.5px;background:linear-gradient(#fdfdfd,#e8e8e8)"></div>
<div class="ab" style="left:129.1px;top:98.9px;width:13.3px;height:12.5px;background:linear-gradient(#f0f0f0,#dedede)"></div>
<svg class="ab" style="left:86.8px;top:98.9px" width="56" height="13" viewBox="0 0 56 13"><rect x="3.2" y="2.5" width="7.5" height="7.5" fill="#eee" stroke="#b8b8b8" stroke-width="0.9"/><path d="M4 3.5 L10 9.5 M10 3.5 L4 9.5" stroke="#ddd" stroke-width="0.6"/><path d="M16.5 12 C16.5 10 17.5 9 19 9 L25.5 2.5 L26 3 L20 9.5 C20 11.5 18.5 12.5 16.5 12z" fill="#ccc" stroke="#aaa" stroke-width="0.6"/><path d="M35.3 1.5 V11.5 M30.3 6.5 H40.3" stroke="#111" stroke-width="1.2"/><path d="M33.6 3.2 L35.3 1.2 L37 3.2z M33.6 9.8 L35.3 11.8 L37 9.8z M32 4.8 L30 6.5 L32 8.2z M38.6 4.8 L40.6 6.5 L38.6 8.2z" fill="#111"/><rect x="45" y="5.5" width="8" height="6.5" rx="0.5" fill="#222"/><path d="M46.5 6 V4.2 Q49 0.8 51.5 4.2 V6" fill="none" stroke="#222" stroke-width="1.4"/></svg>
<div class="t" style="left:158.1px;top:99.5px;font-size:8.98px;line-height:12px;-webkit-text-stroke:0.2px currentColor;letter-spacing:-0.44px;">塗り:</div>
<div class="fld" style="left:179.2px;top:98.5px;width:32.5px;height:12.8px"></div>
<div class="t" style="left:181px;top:98.6px;font-size:10.4px;line-height:13px;-webkit-text-stroke:0.03px currentColor;letter-spacing:0.41px;">100%</div>
<div class="ar2" style="left:211.2px;top:98.5px;width:10.7px;height:12.8px"></div><svg class="ab" style="left:214.3px;top:101.4px" width="5" height="7"><use href="#rt"/></svg>
<div class="ab" style="left:52px;top:114.8px;width:260px;height:1px;background:#8a8a8a"></div>
<div class="ab" style="left:88.5px;top:115.8px;width:223.5px;height:781.2px;background:#fff"></div>
<div class="ab" style="left:88px;top:115.8px;width:1.8px;height:781.2px;background:#484848"></div>
<div class="ab" style="left:70.2px;top:115.8px;width:1px;height:781.2px;background:#9c9c9c"></div>
<div class="ab" style="left:312px;top:115.8px;width:12.4px;height:781.2px;background:linear-gradient(to right,#cfcfcf,#f4f4f4 35%,#fafafa 60%,#e4e4e4)"></div>
<div class="ab" style="left:312.3px;top:121.3px;width:11px;height:770px;border-radius:5.5px;background:linear-gradient(to right,#2c5cc4,#5c96e6 22%,#7cb0f0 45%,#a8daff 72%,#98ccf8 85%,#4a7ad0);border:0.8px solid #3a5eb0"></div>
<div class="ab" style="left:313.5px;top:126px;width:8.5px;height:760px;background:repeating-linear-gradient(transparent 0,transparent 6px,rgba(255,255,255,.10) 6px,rgba(255,255,255,.10) 9px)"></div>
<svg class="ab" style="left:54.4px;top:125px" width="13" height="13"><use href="#lmk"/></svg>
<svg class="ab" style="left:73.4px;top:125px" width="13" height="13"><use href="#lmk"/></svg>
<svg class="ab" style="left:91.2px;top:118px" width="26.8" height="26.8"><use href="#thC"/></svg>
<div class="t" style="left:123.5px;top:127.5px;font-size:9.3px;line-height:12px;-webkit-text-stroke:0.2px currentColor;letter-spacing:0.14px;">↓ ★印刷時のみ使用。作業時はOFFに</div>
<div class="ab" style="left:52px;top:146.7px;width:260px;height:1px;background:#9c9c9c"></div>
<div class="ab" style="left:89.8px;top:147.7px;width:222.2px;height:18.3px;background:#e9e9e9"></div>
<svg class="ab" style="left:54.4px;top:150.7px" width="13" height="13"><use href="#lmk"/></svg>
<svg class="ab" style="left:73.4px;top:150.7px" width="13" height="13"><use href="#lmk"/></svg>
<svg class="ab" style="left:94.2px;top:152px" width="7.2" height="7.6"><path d="M0 0 L7.2 3.8 L0 7.6z" fill="#7a7a7a"/></svg>
<svg class="ab" style="left:106.6px;top:151.2px" width="13.5" height="10.7"><use href="#fold"/></svg>
<div class="t" style="left:123px;top:151.6px;font-size:8.91px;line-height:12px;-webkit-text-stroke:0.2px currentColor;letter-spacing:-0.43px;">プリンタ補正</div>
<div class="ab" style="left:52px;top:166px;width:260px;height:1px;background:#9c9c9c"></div>
<svg class="ab" style="left:54.4px;top:175.2px" width="13" height="13"><use href="#lmk"/></svg>
<svg class="ab" style="left:73.4px;top:175.2px" width="13" height="13"><use href="#lmk"/></svg>
<svg class="ab" style="left:91.2px;top:168.4px" width="26.8" height="26.8"><use href="#thC"/></svg>
<div class="t" style="left:123.5px;top:176.3px;font-size:9.3px;line-height:12px;-webkit-text-stroke:0.2px currentColor;letter-spacing:0.14px;">↓ ★作業時のみ使用。印刷時はOFFに</div>
<div class="ab" style="left:52px;top:197.1px;width:260px;height:1px;background:#9c9c9c"></div>
<div class="ab" style="left:89.8px;top:198.1px;width:222.2px;height:18.6px;background:#e9e9e9"></div>
<svg class="ab" style="left:54.4px;top:201.2px" width="13" height="13"><use href="#lmk"/></svg>
<svg class="ab" style="left:73.4px;top:201.2px" width="13" height="13"><use href="#lmk"/></svg>
<svg class="ab" style="left:55.8px;top:203.79999999999998px" width="11" height="8"><use href="#eye"/></svg>
<svg class="ab" style="left:92.4px;top:203.8px" width="7.6" height="7.6"><path d="M0 0 L7.6 0 L3.8 7.6z" fill="#7a7a7a"/></svg>
<svg class="ab" style="left:106.6px;top:201.5px" width="13.5" height="10.7"><use href="#fold"/></svg>
<div class="t" style="left:123px;top:201.5px;font-size:9.23px;line-height:12px;-webkit-text-stroke:0.2px currentColor;letter-spacing:-0.09px;">モニタ補正</div>
<svg class="ab" style="left:54.4px;top:225.29999999999998px" width="13" height="13"><use href="#lmk"/></svg>
<svg class="ab" style="left:73.4px;top:225.29999999999998px" width="13" height="13"><use href="#lmk"/></svg>
<svg class="ab" style="left:105px;top:218.5px" width="26.8" height="26.8"><use href="#thC"/></svg>
<div class="t" style="left:135.9px;top:226.89999999999998px;font-size:8px;line-height:12px;-webkit-text-stroke:0.1px currentColor;letter-spacing:0.94px;">x11</div>
<div class="ab" style="left:104px;top:247.99999999999997px;width:208px;height:1px;background:repeating-linear-gradient(to right,#b0b0b0 0,#b0b0b0 1px,transparent 1px,transparent 2px);opacity:.75"></div>
<svg class="ab" style="left:54.4px;top:256.9px" width="13" height="13"><use href="#lmk"/></svg>
<svg class="ab" style="left:73.4px;top:256.9px" width="13" height="13"><use href="#lmk"/></svg>
<svg class="ab" style="left:55.8px;top:259.5px" width="11" height="8"><use href="#eye"/></svg>
<svg class="ab" style="left:105px;top:250.1px" width="26.8" height="26.8"><use href="#thC"/></svg>
<div class="t" style="left:135.9px;top:258.79999999999995px;font-size:9.3px;line-height:12px;-webkit-text-stroke:0.2px currentColor;letter-spacing:0.66px;">輝度j</div>
<div class="ab" style="left:104px;top:279.59999999999997px;width:208px;height:1px;background:repeating-linear-gradient(to right,#b0b0b0 0,#b0b0b0 1px,transparent 1px,transparent 2px);opacity:.75"></div>
<svg class="ab" style="left:54.4px;top:288.5px" width="13" height="13"><use href="#lmk"/></svg>
<svg class="ab" style="left:73.4px;top:288.5px" width="13" height="13"><use href="#lmk"/></svg>
<svg class="ab" style="left:105px;top:281.7px" width="26.8" height="26.8"><use href="#thC"/></svg>
<div class="t" style="left:135.9px;top:290.4px;font-size:9.3px;line-height:12px;-webkit-text-stroke:0.2px currentColor;letter-spacing:0.66px;">輝度i</div>
<div class="ab" style="left:104px;top:311.2px;width:208px;height:1px;background:repeating-linear-gradient(to right,#b0b0b0 0,#b0b0b0 1px,transparent 1px,transparent 2px);opacity:.75"></div>
<svg class="ab" style="left:54.4px;top:320.1px" width="13" height="13"><use href="#lmk"/></svg>
<svg class="ab" style="left:73.4px;top:320.1px" width="13" height="13"><use href="#lmk"/></svg>
<svg class="ab" style="left:105px;top:313.3px" width="26.8" height="26.8"><use href="#thC"/></svg>
<div class="t" style="left:135.9px;top:322.0px;font-size:9.3px;line-height:12px;-webkit-text-stroke:0.2px currentColor;letter-spacing:0.27px;">輝度h (外光に合わせ%で調整)</div>
<div class="ab" style="left:104px;top:342.8px;width:208px;height:1px;background:repeating-linear-gradient(to right,#b0b0b0 0,#b0b0b0 1px,transparent 1px,transparent 2px);opacity:.75"></div>
<svg class="ab" style="left:54.4px;top:351.70000000000005px" width="13" height="13"><use href="#lmk"/></svg>
<svg class="ab" style="left:73.4px;top:351.70000000000005px" width="13" height="13"><use href="#lmk"/></svg>
<svg class="ab" style="left:105px;top:344.90000000000003px" width="26.8" height="26.8"><use href="#thC"/></svg>
<div class="t" style="left:135.9px;top:353.6px;font-size:9.3px;line-height:12px;-webkit-text-stroke:0.2px currentColor;letter-spacing:0.31px;">輝度g+ (外光に合わせ%で調整)</div>
<div class="ab" style="left:104px;top:374.4px;width:208px;height:1px;background:repeating-linear-gradient(to right,#b0b0b0 0,#b0b0b0 1px,transparent 1px,transparent 2px);opacity:.75"></div>
<svg class="ab" style="left:54.4px;top:383.3px" width="13" height="13"><use href="#lmk"/></svg>
<svg class="ab" style="left:73.4px;top:383.3px" width="13" height="13"><use href="#lmk"/></svg>
<svg class="ab" style="left:105px;top:376.5px" width="26.8" height="26.8"><use href="#thC"/></svg>
<div class="t" style="left:135.9px;top:385.2px;font-size:9.3px;line-height:12px;-webkit-text-stroke:0.2px currentColor;letter-spacing:0.27px;">輝度g (外光に合わせ%で調整)</div>
<div class="ab" style="left:104px;top:406.0px;width:208px;height:1px;background:repeating-linear-gradient(to right,#b0b0b0 0,#b0b0b0 1px,transparent 1px,transparent 2px);opacity:.75"></div>
<svg class="ab" style="left:54.4px;top:414.90000000000003px" width="13" height="13"><use href="#lmk"/></svg>
<svg class="ab" style="left:73.4px;top:414.90000000000003px" width="13" height="13"><use href="#lmk"/></svg>
<svg class="ab" style="left:105px;top:408.1px" width="26.8" height="26.8"><use href="#thC"/></svg>
<div class="t" style="left:135.9px;top:416.8px;font-size:9.3px;line-height:12px;-webkit-text-stroke:0.2px currentColor;letter-spacing:0.44px;">輝度f (外光に合わせ%で調整)</div>
<div class="ab" style="left:104px;top:437.59999999999997px;width:208px;height:1px;background:repeating-linear-gradient(to right,#b0b0b0 0,#b0b0b0 1px,transparent 1px,transparent 2px);opacity:.75"></div>
<svg class="ab" style="left:54.4px;top:446.5px" width="13" height="13"><use href="#lmk"/></svg>
<svg class="ab" style="left:73.4px;top:446.5px" width="13" height="13"><use href="#lmk"/></svg>
<svg class="ab" style="left:105px;top:439.7px" width="26.8" height="26.8"><use href="#thC"/></svg>
<div class="t" style="left:135.9px;top:448.4px;font-size:9.3px;line-height:12px;-webkit-text-stroke:0.2px currentColor;letter-spacing:0.27px;">輝度e (外光に合わせ%で調整)</div>
<div class="ab" style="left:104px;top:469.2px;width:208px;height:1px;background:repeating-linear-gradient(to right,#b0b0b0 0,#b0b0b0 1px,transparent 1px,transparent 2px);opacity:.75"></div>
<svg class="ab" style="left:54.4px;top:478.1px" width="13" height="13"><use href="#lmk"/></svg>
<svg class="ab" style="left:73.4px;top:478.1px" width="13" height="13"><use href="#lmk"/></svg>
<svg class="ab" style="left:105px;top:471.3px" width="26.8" height="26.8"><use href="#thC"/></svg>
<div class="t" style="left:135.9px;top:480.0px;font-size:9.3px;line-height:12px;-webkit-text-stroke:0.2px currentColor;letter-spacing:0.27px;">輝度d (外光に合わせ%で調整)</div>
<div class="ab" style="left:104px;top:500.8px;width:208px;height:1px;background:repeating-linear-gradient(to right,#b0b0b0 0,#b0b0b0 1px,transparent 1px,transparent 2px);opacity:.75"></div>
<svg class="ab" style="left:54.4px;top:509.70000000000005px" width="13" height="13"><use href="#lmk"/></svg>
<svg class="ab" style="left:73.4px;top:509.70000000000005px" width="13" height="13"><use href="#lmk"/></svg>
<svg class="ab" style="left:105px;top:502.90000000000003px" width="26.8" height="26.8"><use href="#thC"/></svg>
<div class="t" style="left:135.9px;top:511.6px;font-size:9.3px;line-height:12px;-webkit-text-stroke:0.2px currentColor;letter-spacing:0.31px;">輝度c (外光に合わせ%で調整)</div>
<div class="ab" style="left:89.8px;top:532.7px;width:222.2px;height:31.2px;background:#c3d7f6"></div>
<div class="ab" style="left:104px;top:532.4000000000001px;width:208px;height:1px;background:repeating-linear-gradient(to right,#b0b0b0 0,#b0b0b0 1px,transparent 1px,transparent 2px);opacity:.75"></div>
<svg class="ab" style="left:54.4px;top:541.3000000000001px" width="13" height="13"><use href="#lmk"/></svg>
<svg class="ab" style="left:73.4px;top:541.3000000000001px" width="13" height="13"><use href="#lmk"/></svg>
<svg class="ab" style="left:55.8px;top:543.9000000000001px" width="11" height="8"><use href="#eye"/></svg>
<svg class="ab" style="left:74px;top:541.8000000000001px" width="13" height="12" viewBox="0 0 13 12"><path d="M1 11.5 C0.8 9 2.5 7.5 4.5 7.5 L11.5 0.8 L12.3 1.5 L5.5 8.5 C5.8 10.5 3.5 12 1 11.5z" fill="#9a9a9a" stroke="#333" stroke-width="0.8"/></svg>
<svg class="ab" style="left:105px;top:534.5px" width="26.8" height="26.8"><use href="#thC"/></svg>
<div class="t" style="left:135.9px;top:543.2px;font-size:9.3px;line-height:12px;-webkit-text-stroke:0.2px currentColor;letter-spacing:0.27px;">輝度b (外光に合わせ%で調整)</div>
<div class="ab" style="left:104px;top:564.0px;width:208px;height:1px;background:repeating-linear-gradient(to right,#b0b0b0 0,#b0b0b0 1px,transparent 1px,transparent 2px);opacity:.75"></div>
<svg class="ab" style="left:54.4px;top:572.9px" width="13" height="13"><use href="#lmk"/></svg>
<svg class="ab" style="left:73.4px;top:572.9px" width="13" height="13"><use href="#lmk"/></svg>
<svg class="ab" style="left:105px;top:566.0999999999999px" width="26.8" height="26.8"><use href="#thC"/></svg>
<div class="t" style="left:135.9px;top:574.8px;font-size:9.3px;line-height:12px;-webkit-text-stroke:0.2px currentColor;letter-spacing:0.27px;">輝度a (外光に合わせ%で調整)</div>
<div class="ab" style="left:104px;top:595.6000000000001px;width:208px;height:1px;background:repeating-linear-gradient(to right,#b0b0b0 0,#b0b0b0 1px,transparent 1px,transparent 2px);opacity:.75"></div>
<svg class="ab" style="left:54.4px;top:604.5000000000001px" width="13" height="13"><use href="#lmk"/></svg>
<svg class="ab" style="left:73.4px;top:604.5000000000001px" width="13" height="13"><use href="#lmk"/></svg>
<svg class="ab" style="left:105px;top:597.7px" width="26.8" height="26.8"><use href="#thH"/></svg>
<div class="t" style="left:135.9px;top:606.4000000000001px;font-size:9.3px;line-height:12px;-webkit-text-stroke:0.2px currentColor;letter-spacing:0.83px;">彩度+3</div>
<div class="ab" style="left:104px;top:627.2px;width:208px;height:1px;background:repeating-linear-gradient(to right,#b0b0b0 0,#b0b0b0 1px,transparent 1px,transparent 2px);opacity:.75"></div>
<svg class="ab" style="left:54.4px;top:636.1px" width="13" height="13"><use href="#lmk"/></svg>
<svg class="ab" style="left:73.4px;top:636.1px" width="13" height="13"><use href="#lmk"/></svg>
<svg class="ab" style="left:105px;top:629.3px" width="26.8" height="26.8"><use href="#thB"/></svg>
<div class="t" style="left:135.9px;top:637.7px;font-size:8px;line-height:12px;-webkit-text-stroke:0.1px currentColor;letter-spacing:0.75px;">x01</div>
<div class="ab" style="left:104px;top:658.8000000000001px;width:208px;height:1px;background:repeating-linear-gradient(to right,#b0b0b0 0,#b0b0b0 1px,transparent 1px,transparent 2px);opacity:.75"></div>
<svg class="ab" style="left:54.4px;top:667.7px" width="13" height="13"><use href="#lmk"/></svg>
<svg class="ab" style="left:73.4px;top:667.7px" width="13" height="13"><use href="#lmk"/></svg>
<svg class="ab" style="left:105px;top:660.9px" width="26.8" height="26.8"><use href="#thB"/></svg>
<div class="t" style="left:135.9px;top:669.6px;font-size:9.3px;line-height:12px;-webkit-text-stroke:0.2px currentColor;letter-spacing:0.05px;">カラバラ(中間調)a</div>
<div class="ab" style="left:104px;top:690.4000000000001px;width:208px;height:1px;background:repeating-linear-gradient(to right,#b0b0b0 0,#b0b0b0 1px,transparent 1px,transparent 2px);opacity:.75"></div>
<svg class="ab" style="left:54.4px;top:699.3000000000001px" width="13" height="13"><use href="#lmk"/></svg>
<svg class="ab" style="left:73.4px;top:699.3000000000001px" width="13" height="13"><use href="#lmk"/></svg>
<svg class="ab" style="left:105px;top:692.5px" width="26.8" height="26.8"><use href="#thB"/></svg>
<div class="t" style="left:135.9px;top:701.2px;font-size:9.3px;line-height:12px;-webkit-text-stroke:0.2px currentColor;letter-spacing:0.01px;">カラバラ(青色用)</div>
<div class="ab" style="left:104px;top:722.0px;width:208px;height:1px;background:repeating-linear-gradient(to right,#b0b0b0 0,#b0b0b0 1px,transparent 1px,transparent 2px);opacity:.75"></div>
<svg class="ab" style="left:54.4px;top:730.9px" width="13" height="13"><use href="#lmk"/></svg>
<svg class="ab" style="left:73.4px;top:730.9px" width="13" height="13"><use href="#lmk"/></svg>
<svg class="ab" style="left:105px;top:724.0999999999999px" width="26.8" height="26.8"><use href="#thB"/></svg>
<div class="t" style="left:135.9px;top:732.8px;font-size:9.04px;line-height:12px;-webkit-text-stroke:0.2px currentColor;letter-spacing:-0.23px;">カラバラ(ハイライト部)b</div>
<div class="ab" style="left:104px;top:753.6000000000001px;width:208px;height:1px;background:repeating-linear-gradient(to right,#b0b0b0 0,#b0b0b0 1px,transparent 1px,transparent 2px);opacity:.75"></div>
<svg class="ab" style="left:54.4px;top:762.5000000000001px" width="13" height="13"><use href="#lmk"/></svg>
<svg class="ab" style="left:73.4px;top:762.5000000000001px" width="13" height="13"><use href="#lmk"/></svg>
<svg class="ab" style="left:105px;top:755.7px" width="26.8" height="26.8"><use href="#thB"/></svg>
<div class="t" style="left:135.9px;top:764.4000000000001px;font-size:8.99px;line-height:12px;-webkit-text-stroke:0.2px currentColor;letter-spacing:-0.27px;">カラバラ(ハイライト部)a</div>
<div class="ab" style="left:104px;top:785.2px;width:208px;height:1px;background:repeating-linear-gradient(to right,#b0b0b0 0,#b0b0b0 1px,transparent 1px,transparent 2px);opacity:.75"></div>
<svg class="ab" style="left:54.4px;top:794.1px" width="13" height="13"><use href="#lmk"/></svg>
<svg class="ab" style="left:73.4px;top:794.1px" width="13" height="13"><use href="#lmk"/></svg>
<svg class="ab" style="left:105px;top:787.3px" width="26.8" height="26.8"><use href="#thC"/></svg>
<div class="t" style="left:135.9px;top:796.0px;font-size:8.92px;line-height:12px;-webkit-text-stroke:0.2px currentColor;letter-spacing:-0.42px;">カラーh</div>
<div class="ab" style="left:104px;top:816.8px;width:208px;height:1px;background:repeating-linear-gradient(to right,#b0b0b0 0,#b0b0b0 1px,transparent 1px,transparent 2px);opacity:.75"></div>
<svg class="ab" style="left:54.4px;top:825.6999999999999px" width="13" height="13"><use href="#lmk"/></svg>
<svg class="ab" style="left:73.4px;top:825.6999999999999px" width="13" height="13"><use href="#lmk"/></svg>
<svg class="ab" style="left:55.8px;top:828.3px" width="11" height="8"><use href="#eye"/></svg>
<svg class="ab" style="left:105px;top:818.8999999999999px" width="26.8" height="26.8"><use href="#thC"/></svg>
<div class="t" style="left:135.9px;top:827.5999999999999px;font-size:9.01px;line-height:12px;-webkit-text-stroke:0.2px currentColor;letter-spacing:-0.32px;">カラーg</div>
<div class="ab" style="left:104px;top:848.4000000000001px;width:208px;height:1px;background:repeating-linear-gradient(to right,#b0b0b0 0,#b0b0b0 1px,transparent 1px,transparent 2px);opacity:.75"></div>
<svg class="ab" style="left:54.4px;top:857.3000000000001px" width="13" height="13"><use href="#lmk"/></svg>
<svg class="ab" style="left:73.4px;top:857.3000000000001px" width="13" height="13"><use href="#lmk"/></svg>
<svg class="ab" style="left:105px;top:850.5px" width="26.8" height="26.8"><use href="#thC"/></svg>
<div class="t" style="left:135.9px;top:859.2px;font-size:9.01px;line-height:12px;-webkit-text-stroke:0.2px currentColor;letter-spacing:-0.29px;">カラーf</div>
<div class="ab" style="left:104px;top:880.0px;width:208px;height:1px;background:repeating-linear-gradient(to right,#b0b0b0 0,#b0b0b0 1px,transparent 1px,transparent 2px);opacity:.75"></div>
<svg class="ab" style="left:54.4px;top:888.9px" width="13" height="13"><use href="#lmk"/></svg>
<svg class="ab" style="left:73.4px;top:888.9px" width="13" height="13"><use href="#lmk"/></svg>
<svg class="ab" style="left:105px;top:882.0999999999999px" width="26.8" height="26.8"><use href="#thC"/></svg>
<div class="t" style="left:135.9px;top:890.8px;font-size:8.8px;line-height:12px;-webkit-text-stroke:0.2px currentColor;letter-spacing:-0.55px;">カラーe</div>
<div class="ab pin" style="left:325.4px;top:49px;width:253.2px;height:272px"></div>
<div class="ab" style="left:578px;top:49px;width:1px;height:272px;background:#7a7a7a"></div>
<div class="circ" style="left:328.9px;top:50.8px"></div>
<div class="circ" style="left:340.09999999999997px;top:50.8px"></div>
<div class="circ" style="left:351.29999999999995px;top:50.8px"></div>
<div class="ab" style="left:325.4px;top:60px;width:252.6px;height:1px;background:#a6a6a6"></div>
<div class="tabs" style="left:325.4px;top:59.5px;width:252.6px;height:13.7px"></div>
<div class="ab pin" style="left:328.9px;top:61.8px;width:53.10000000000002px;height:12.399999999999999px;border-left:1px solid #a8a8a8;border-top:1px solid #c8c8c8"></div>
<svg class="ab" style="left:381.5px;top:61.8px" width="11.863999999999999" height="12.399999999999999"><path d="M0 0 L9.863999999999999 12.399999999999999 L0 12.399999999999999z" fill="#f2f2f2"/><path d="M0.5 0 L10.363999999999999 12.399999999999999" stroke="#8a8a8a" stroke-width="1"/></svg>
<div class="t" style="left:334.3px;top:61.2px;font-size:9.09px;line-height:12.7px;-webkit-text-stroke:0.22px currentColor;letter-spacing:-0.14px;">ナビゲータ</div>
<svg class="ab" style="left:410.3px;top:61.8px" width="11.863999999999999" height="12.399999999999999"><path d="M0.5 0 L10.363999999999999 12.399999999999999" stroke="#9a9a9a" stroke-width="1"/><path d="M1.5 0 L11.363999999999999 12.399999999999999" stroke="#dedede" stroke-width="0.8"/></svg>
<div class="t" style="left:390.8px;top:61.2px;font-size:9.2px;line-height:12.7px;-webkit-text-stroke:0.22px currentColor;letter-spacing:0.60px;">情報</div>
<svg class="ab" style="left:470.9px;top:61.8px" width="11.863999999999999" height="12.399999999999999"><path d="M0.5 0 L10.363999999999999 12.399999999999999" stroke="#9a9a9a" stroke-width="1"/><path d="M1.5 0 L11.363999999999999 12.399999999999999" stroke="#dedede" stroke-width="0.8"/></svg>
<div class="t" style="left:421.4px;top:61.2px;font-size:8.64px;line-height:12.7px;-webkit-text-stroke:0.22px currentColor;letter-spacing:-0.62px;">ヒストグラム</div>
<div class="ab" style="left:563.5px;top:60.55px;width:12.5px;height:12.5px;border-radius:50%;background:radial-gradient(circle at 50% 40%,#fff,#dedede);border:1.3px solid #3a3a3a"></div>
<svg class="ab" style="left:567.9px;top:63.55px" width="5" height="6"><use href="#rt"/></svg>
<svg class="ab" style="left:329px;top:97px" width="246" height="186" viewBox="-1 -1 246 186">
<defs>
<filter id="bl" x="-10%" y="-10%" width="120%" height="120%"><feGaussianBlur stdDeviation="1.5"/></filter>
<filter id="bl2" x="-30%" y="-30%" width="160%" height="160%"><feGaussianBlur stdDeviation="8"/></filter>
<filter id="bl3" x="-30%" y="-30%" width="160%" height="160%"><feGaussianBlur stdDeviation="3"/></filter>
<radialGradient id="lp" cx="0.5" cy="0.5" r="0.5"><stop offset="0" stop-color="#fff"/><stop offset="0.3" stop-color="#ffe0e0"/><stop offset="0.55" stop-color="#e84848" stop-opacity="0.75"/><stop offset="1" stop-color="#a00" stop-opacity="0"/></radialGradient>
</defs>
<rect x="-1" y="-1" width="246" height="186" fill="#160505"/>
<g filter="url(#bl2)">
<rect x="-5" y="30" width="62" height="40" fill="#4a1a08"/>
<rect x="-5" y="68" width="62" height="80" fill="#a8501a"/>
<ellipse cx="28" cy="122" rx="24" ry="20" fill="#e8a038"/>
<ellipse cx="10" cy="104" rx="12" ry="26" fill="#c87426"/>
<rect x="112" y="30" width="52" height="100" fill="#2e0a08"/>
<rect x="170" y="10" width="78" height="117" fill="#400c0a"/>
<ellipse cx="180" cy="66" rx="12" ry="18" fill="#b01c1c"/>
<ellipse cx="210" cy="100" rx="15" ry="24" fill="#7e2216"/>
</g>
<g filter="url(#bl)">
<rect x="-1" y="-1" width="172" height="19" fill="#0c0303"/><rect x="170" y="-1" width="76" height="24" fill="#260808"/>
<rect x="60" y="34" width="52" height="115" fill="#0e0404"/>
<path d="M60 54 Q86 26 112 54z" fill="#0e0404"/>
<rect x="132" y="64" width="32" height="64" fill="#1e0707"/>
<rect x="164" y="18" width="6" height="145" fill="#080101"/>
<rect x="171" y="52" width="21" height="60" rx="9" fill="#1e0505"/>
<circle cx="18" cy="48" r="7" fill="#301006"/>
<rect x="44" y="36" width="13" height="22" rx="4" fill="#200a04"/>
<rect x="46" y="60" width="6" height="20" fill="#200a04"/>
<rect x="44" y="88" width="14" height="32" fill="#240c04"/><rect x="48" y="94" width="6" height="18" fill="#8a4030"/>
<circle cx="23.5" cy="116" r="14" fill="#0a0300"/>
<rect x="19" y="128" width="6" height="16" fill="#0a0300"/>
<rect x="0" y="141" width="56" height="3" fill="#160702"/>
<rect x="166" y="125" width="80" height="38" fill="#160404"/>
<rect x="-1" y="147" width="246" height="40" fill="#0c0303"/>
<rect x="208" y="138" width="11" height="18" fill="#3a1410"/>
</g>
<path d="M184 68 L196 67" stroke="#f0e0d0" stroke-width="1.6" opacity="0.85"/><path d="M204 86 L208 84 L210 92 L206 95z" fill="#c03030" opacity="0.8"/>
<circle cx="79.7" cy="71" r="9" fill="url(#lp)"/>
<circle cx="151.9" cy="57.5" r="6.5" fill="url(#lp)"/>
<ellipse cx="82.8" cy="133" rx="10" ry="2.5" fill="#d03030" opacity="0.8"/><circle cx="82.8" cy="129" r="10" fill="url(#lp)"/>
</svg>
<div class="ab" style="left:329.5px;top:97.8px;width:244px;height:183.6px;border:1.6px solid #c85050;box-shadow:0 0 0 0.6px #5a1a1a"></div>
<div class="ab" style="left:325.4px;top:306.8px;width:128px;height:13px;background:#fff;border-top:1px solid #a0a0a0"></div>
<div class="t" style="left:332px;top:307.6px;font-size:10.5px;line-height:13px;-webkit-text-stroke:0.08px currentColor;letter-spacing:0.43px;">66.67%</div>
<div class="ab" style="left:453.4px;top:306.8px;width:19.4px;height:13px;background:linear-gradient(#fafafa,#e0e0e0);border:1px solid #9a9a9a;border-bottom:none"></div>
<svg class="ab" style="left:458px;top:309.5px" width="11" height="7"><path d="M1 5.2 H9.5" stroke="#222" stroke-width="1.2"/><path d="M3.5 5 L6.5 2.2 L9 5z" fill="#222"/></svg>
<div class="ab" style="left:472.8px;top:306.8px;width:105.6px;height:13px;border-top:1px solid #a0a0a0;background:linear-gradient(#f4f4f4,#e8e8e8)"></div>
<div class="ab" style="left:477px;top:310px;width:20px;height:1px;background:#666"></div>
<div class="ab" style="left:325.4px;top:319.5px;width:253px;height:1.5px;background:#555"></div>
<div class="ab pin" style="left:325.4px;top:320.5px;width:175px;height:206px"></div>
<div class="ab" style="left:500.4px;top:320.5px;width:1px;height:576.5px;background:#767676"></div>
<div class="circ" style="left:328.9px;top:322.3px"></div>
<div class="circ" style="left:340.09999999999997px;top:322.3px"></div>
<div class="circ" style="left:351.29999999999995px;top:322.3px"></div>
<div class="ab" style="left:325.4px;top:331.5px;width:175px;height:1px;background:#a6a6a6"></div>
<div class="tabs" style="left:325.4px;top:330.8px;width:175px;height:13.4px"></div>
<div class="ab pin" style="left:328.9px;top:333.1px;width:28.600000000000023px;height:12.1px;border-left:1px solid #a8a8a8;border-top:1px solid #c8c8c8"></div>
<svg class="ab" style="left:357.0px;top:333.1px" width="11.648" height="12.1"><path d="M0 0 L9.648 12.1 L0 12.1z" fill="#f2f2f2"/><path d="M0.5 0 L10.148 12.1" stroke="#8a8a8a" stroke-width="1"/></svg>
<div class="t" style="left:334.7px;top:332.5px;font-size:9.2px;line-height:12.4px;-webkit-text-stroke:0.22px currentColor;letter-spacing:1.50px;">文字</div>
<svg class="ab" style="left:387.5px;top:333.1px" width="11.648" height="12.1"><path d="M0.5 0 L10.148 12.1" stroke="#9a9a9a" stroke-width="1"/><path d="M1.5 0 L11.148 12.1" stroke="#dedede" stroke-width="0.8"/></svg>
<div class="t" style="left:366.8px;top:332.5px;font-size:9.2px;line-height:12.4px;-webkit-text-stroke:0.22px currentColor;letter-spacing:0.20px;">段落</div>
<div class="ab" style="left:489px;top:331.7px;width:12.5px;height:12.5px;border-radius:50%;background:radial-gradient(circle at 50% 40%,#fff,#dedede);border:1.3px solid #3a3a3a"></div>
<svg class="ab" style="left:493.4px;top:334.7px" width="5" height="6"><use href="#rt"/></svg>
<div class="pop" style="left:328.1px;top:348.8px;width:100.3px;height:15.3px;border-radius:2px"></div>
<div class="ar2" style="left:415.40000000000003px;top:348.8px;width:13px;height:15.3px;border-radius:3px"></div>
<svg class="ab" style="left:418.40000000000003px;top:354.45px" width="7" height="5"><use href="#dn"/></svg>
<div class="t" style="left:330.3px;top:350.5px;font-size:9.06px;line-height:12px;-webkit-text-stroke:0.15px currentColor;letter-spacing:-0.61px;">ヒラギノ角ゴ Pro</div>
<div class="pop" style="left:432.3px;top:348.8px;width:63.5px;height:15.3px;border-radius:2px"></div>
<div class="ar2" style="left:483.3px;top:348.8px;width:12.5px;height:15.3px;border-radius:3px"></div>
<svg class="ab" style="left:486.05px;top:354.45px" width="7" height="5"><use href="#dn"/></svg>
<div class="t" style="left:434.4px;top:350.5px;font-size:9.93px;line-height:12px;-webkit-text-stroke:0.12px currentColor;letter-spacing:-0.09px;">W3</div>
<div class="fld" style="left:350.3px;top:373.2px;width:46.3px;height:14.9px"></div>
<div class="ar2" style="left:396.1px;top:373.2px;width:12.5px;height:14.9px;border-radius:3px"></div>
<svg class="ab" style="left:399.1px;top:378.65px" width="7" height="5"><use href="#dn"/></svg>
<div class="t" style="left:353.2px;top:374.5px;font-size:10.2px;line-height:13px;-webkit-text-stroke:0.12px currentColor;letter-spacing:0.17px;">90 px</div>
<div class="fld" style="left:437.5px;top:373.2px;width:45.5px;height:14.9px"></div>
<div class="ar2" style="left:482.5px;top:373.2px;width:12.5px;height:14.9px;border-radius:3px"></div>
<svg class="ab" style="left:485.5px;top:378.65px" width="7" height="5"><use href="#dn"/></svg>
<div class="t" style="left:440.4px;top:374.5px;font-size:10.2px;line-height:13px;-webkit-text-stroke:0.12px currentColor;letter-spacing:0.18px;">100 px</div>
<div class="fld" style="left:350.3px;top:391.5px;width:47.3px;height:15px"></div>
<div class="t" style="left:353.2px;top:393px;font-size:10.2px;line-height:13px;-webkit-text-stroke:0.12px currentColor;letter-spacing:0.41px;">100%</div>
<div class="fld" style="left:437.5px;top:391.5px;width:47.3px;height:15px"></div>
<div class="t" style="left:440.4px;top:393px;font-size:10.2px;line-height:13px;-webkit-text-stroke:0.12px currentColor;letter-spacing:0.41px;">100%</div>
<div class="ab" style="left:325.4px;top:410px;width:175px;height:1px;background:#b8b8b8"></div>
<div class="fld" style="left:350.3px;top:415px;width:46.3px;height:14.8px"></div>
<div class="ar2" style="left:396.1px;top:415px;width:12.5px;height:14.8px;border-radius:3px"></div>
<svg class="ab" style="left:399.1px;top:420.4px" width="7" height="5"><use href="#dn"/></svg>
<div class="t" style="left:353.2px;top:416.3px;font-size:10.12px;line-height:13px;-webkit-text-stroke:0.12px currentColor;letter-spacing:-0.12px;">0%</div>
<div class="fld" style="left:350.3px;top:433.4px;width:46.3px;height:15px"></div>
<div class="ar2" style="left:396.1px;top:433.4px;width:12.5px;height:15px;border-radius:3px"></div>
<svg class="ab" style="left:399.1px;top:438.9px" width="7" height="5"><use href="#dn"/></svg>
<div class="t" style="left:353.2px;top:434.8px;font-size:10.2px;line-height:13px;-webkit-text-stroke:0.12px currentColor;">0</div>
<div class="fld" style="left:437.5px;top:433.4px;width:45.5px;height:15px"></div>
<div class="ar2" style="left:482.5px;top:433.4px;width:12.5px;height:15px;border-radius:3px"></div>
<svg class="ab" style="left:485.5px;top:438.9px" width="7" height="5"><use href="#dn"/></svg>
<div class="t" style="left:440.4px;top:435.5px;font-size:7.01px;line-height:12px;-webkit-text-stroke:0px currentColor;letter-spacing:-2.09px;color:#a8a8a8">オプティカル</div>
<div class="ab" style="left:325.4px;top:451.9px;width:175px;height:1px;background:#b8b8b8"></div>
<div class="fld" style="left:350.3px;top:456.5px;width:47.3px;height:15px"></div>
<div class="t" style="left:353.2px;top:458px;font-size:10.2px;line-height:13px;-webkit-text-stroke:0.12px currentColor;letter-spacing:0.34px;">0 px</div>
<div class="t" style="left:409.1px;top:459px;font-size:8.87px;line-height:12px;-webkit-text-stroke:0.2px currentColor;letter-spacing:-0.33px;">カラー:</div>
<div class="ab" style="left:437.5px;top:457px;width:46.8px;height:14.9px;background:#000;border:1px solid #7a7a7a"></div>
<div class="ab" style="left:325.4px;top:474.8px;width:175px;height:1px;background:#b8b8b8"></div>
<svg class="ab" style="left:332px;top:373.5px" width="15" height="15" viewBox="0 0 15 15"><text x="9" y="13" font-family="Liberation Serif" font-weight="bold" font-size="15" text-anchor="middle" fill="#111">T</text><text x="3.2" y="13.5" font-family="Liberation Serif" font-size="7" fill="#666">T</text></svg>
<svg class="ab" style="left:332px;top:391.5px" width="15" height="15" viewBox="0 0 15 15"><text x="9.5" y="13" font-family="Liberation Serif" font-weight="bold" font-size="15" text-anchor="middle" fill="#111">T</text><path d="M2 2 V13.5 M0.5 4 L2 1.5 L3.5 4 M0.5 11.5 L2 14 L3.5 11.5" fill="none" stroke="#111" stroke-width="1"/></svg>
<svg class="ab" style="left:419.5px;top:372.5px" width="15" height="15" viewBox="0 0 15 15"><text x="7.5" y="7.5" font-family="Liberation Sans" font-weight="bold" font-size="7.5" text-anchor="middle" fill="#222">IA</text><text x="7.5" y="14.5" font-family="Liberation Sans" font-weight="bold" font-size="7.5" text-anchor="middle" fill="#222">A</text><path d="M2.5 1.5 H12.5" stroke="#111" stroke-width="0.9"/></svg>
<svg class="ab" style="left:419.5px;top:391px" width="15" height="15" viewBox="0 0 15 15"><text x="7.5" y="11" font-family="Liberation Serif" font-weight="bold" font-size="14" text-anchor="middle" fill="#111">T</text><path d="M1 13.2 H14 M3 11.7 L1 13.2 L3 14.7 M12 11.7 L14 13.2 L12 14.7" fill="none" stroke="#111" stroke-width="1"/></svg>
<svg class="ab" style="left:332px;top:415px" width="15" height="15" viewBox="0 0 15 15"><text x="7.5" y="9" font-family="Liberation Sans" font-size="8.5" text-anchor="middle" fill="#222">あ</text><path d="M2 1 V10 M13 1 V10" stroke="#555" stroke-width="0.8" stroke-dasharray="1 1"/><path d="M1 12.5 H6 M9 12.5 H14 M3 11 L1 12.5 L3 14 M12 11 L14 12.5 L12 14" fill="none" stroke="#111" stroke-width="0.9"/></svg>
<svg class="ab" style="left:332px;top:433.5px" width="15" height="15" viewBox="0 0 15 15"><rect x="1" y="1" width="13" height="7" fill="#bbb"/><text x="7.5" y="8" font-family="Liberation Sans" font-weight="bold" font-size="8.5" text-anchor="middle" fill="#111">AV</text><path d="M1 12 H14 M3 10.5 L1 12 L3 13.5 M12 10.5 L14 12 L12 13.5" fill="none" stroke="#111" stroke-width="1"/></svg>
<svg class="ab" style="left:419.5px;top:433.5px" width="15" height="15" viewBox="0 0 15 15"><text x="7.5" y="10" font-family="Liberation Sans" font-weight="bold" font-size="8.5" text-anchor="middle" fill="#333">AV</text><path d="M7.5 0.5 V14 M5.5 2.5 L7.5 0.5 L9.5 2.5 M5.5 12 L7.5 14 L9.5 12" fill="none" stroke="#333" stroke-width="0.9"/></svg>
<svg class="ab" style="left:331px;top:456.5px" width="15" height="15" viewBox="0 0 15 15"><text x="5" y="12" font-family="Liberation Sans" font-size="9" text-anchor="middle" fill="#222">A</text><text x="11" y="7" font-family="Liberation Sans" font-weight="bold" font-size="7" text-anchor="middle" fill="#222">a</text><path d="M11 8 V14 M9.5 12 L11 14 L12.5 12" fill="none" stroke="#111" stroke-width="0.9"/><path d="M1 13.5 H9" stroke="#555" stroke-width="0.6"/></svg>
<div class="sb" style="left:338.3px;top:480.4px;width:16.8px;height:16.3px;font-size:11.5px;line-height:15px">T</div>
<div class="sb" style="left:354.6px;top:480.4px;width:16.8px;height:16.3px;font-size:11.5px;line-height:15px"><i>T</i></div>
<div class="sb" style="left:380.0px;top:480.4px;width:16.8px;height:16.3px;font-size:11.5px;line-height:15px">TT</div>
<div class="sb" style="left:396.3px;top:480.4px;width:16.8px;height:16.3px;font-size:11.5px;line-height:15px">T<span style="font-size:8px">r</span></div>
<div class="sb" style="left:412.6px;top:480.4px;width:16.8px;height:16.3px;font-size:11.5px;line-height:15px">T<sup style="font-size:6px">1</sup></div>
<div class="sb" style="left:428.9px;top:480.4px;width:16.8px;height:16.3px;font-size:11.5px;line-height:15px">T<sub style="font-size:6px">1</sub></div>
<div class="sb" style="left:454.5px;top:480.4px;width:16.8px;height:16.3px;font-size:11.5px;line-height:15px"><u>T</u></div>
<div class="sb" style="left:470.8px;top:480.4px;width:16.8px;height:16.3px;font-size:11.5px;line-height:15px"><s>T</s></div>
<div class="ab" style="left:325.4px;top:500.4px;width:175px;height:1px;background:#b8b8b8"></div>
<div class="pop" style="left:329.3px;top:504.3px;width:88.8px;height:17.1px;border-radius:5px"><div class="ar" style="width:18px"></div></div>
<svg class="ab" style="left:405px;top:507px" width="8" height="12"><use href="#ud"/></svg>
<div class="t" style="left:336.6px;top:506.5px;font-size:9.52px;line-height:12px;-webkit-text-stroke:0.2px currentColor;letter-spacing:-0.08px;">英語 (米国)</div>
<div class="t" style="left:424.5px;top:505px;font-size:10px;font-family:Liberation Serif;line-height:14px;color:#333">a<span style="font-size:11px;position:relative;top:3px">a</span></div>
<div class="pop" style="left:439.5px;top:504.3px;width:60px;height:17.1px;border-radius:5px"><div class="ar" style="width:20px"></div></div>
<svg class="ab" style="left:486px;top:507px" width="8" height="12"><use href="#ud"/></svg>
<div class="t" style="left:446.7px;top:506.5px;font-size:8.85px;line-height:12px;-webkit-text-stroke:0.2px currentColor;letter-spacing:-1.44px;">シャ…</div>
<div class="ab pin" style="left:325.4px;top:526.5px;width:175px;height:106.5px"></div>
<div class="circ" style="left:328.9px;top:528.3px"></div>
<div class="circ" style="left:340.09999999999997px;top:528.3px"></div>
<div class="circ" style="left:351.29999999999995px;top:528.3px"></div>
<div class="ab" style="left:325.4px;top:537.5px;width:175px;height:1px;background:#a6a6a6"></div>
<div class="tabs" style="left:325.4px;top:536.7px;width:175px;height:13.4px"></div>
<div class="ab pin" style="left:328.9px;top:539.0px;width:34.60000000000002px;height:12.1px;border-left:1px solid #a8a8a8;border-top:1px solid #c8c8c8"></div>
<svg class="ab" style="left:363.0px;top:539.0px" width="11.648" height="12.1"><path d="M0 0 L9.648 12.1 L0 12.1z" fill="#f2f2f2"/><path d="M0.5 0 L10.148 12.1" stroke="#8a8a8a" stroke-width="1"/></svg>
<div class="t" style="left:334.5px;top:538.4000000000001px;font-size:8.91px;line-height:12.4px;-webkit-text-stroke:0.22px currentColor;letter-spacing:-0.42px;">カラー</div>
<svg class="ab" style="left:413.0px;top:539.0px" width="11.648" height="12.1"><path d="M0.5 0 L10.148 12.1" stroke="#9a9a9a" stroke-width="1"/><path d="M1.5 0 L11.148 12.1" stroke="#dedede" stroke-width="0.8"/></svg>
<div class="t" style="left:372.4px;top:538.4000000000001px;font-size:8.65px;line-height:12.4px;-webkit-text-stroke:0.22px currentColor;letter-spacing:-0.63px;">スウォッチ</div>
<svg class="ab" style="left:461.0px;top:539.0px" width="11.648" height="12.1"><path d="M0.5 0 L10.148 12.1" stroke="#9a9a9a" stroke-width="1"/><path d="M1.5 0 L11.148 12.1" stroke="#dedede" stroke-width="0.8"/></svg>
<div class="t" style="left:424.8px;top:538.4000000000001px;font-size:8.98px;line-height:12.4px;-webkit-text-stroke:0.22px currentColor;letter-spacing:-0.28px;">スタイル</div>
<div class="ab" style="left:489px;top:537.6000000000001px;width:12.5px;height:12.5px;border-radius:50%;background:radial-gradient(circle at 50% 40%,#fff,#dedede);border:1.3px solid #3a3a3a"></div>
<svg class="ab" style="left:493.4px;top:540.6000000000001px" width="5" height="6"><use href="#rt"/></svg>
<div class="ab" style="left:341.7px;top:567.2px;width:15.8px;height:16.3px;background:#fff;border:1.2px solid #2a2a2a"></div>
<div class="ab" style="left:331px;top:557px;width:17px;height:16.7px;background:#000;border:1.2px solid #5a5a5a;box-shadow:0 0 0 1px #d8d8d8"></div>
<div class="t" style="left:360.5px;top:555.2px;font-size:8.6px;line-height:10px;-webkit-text-stroke:0.25px currentColor;">C</div>
<div class="ab" style="left:374.9px;top:556.1px;width:69.7px;height:5.2px;background:linear-gradient(to right,#3a0c0c,#000 85%)"></div>
<svg class="ab" style="left:434.7px;top:561.4000000000001px" width="9" height="6.5" viewBox="0 0 9 6.5"><path d="M0.6 6 V3.5 L4.5 0.5 L8.4 3.5 V6z" fill="#a4a8b0" stroke="#6a6a70" stroke-width="0.8"/></svg>
<div class="fld" style="left:449.4px;top:553.2px;width:35.4px;height:13.2px"></div>
<div class="t" style="left:469.2px;top:553.5px;font-size:10.8px;line-height:13px;-webkit-text-stroke:0.1px currentColor;letter-spacing:0.78px;">93</div>
<div class="t" style="left:485.5px;top:555.2px;font-size:7px;line-height:9px;-webkit-text-stroke:0px currentColor;color:#555">%</div>
<div class="t" style="left:360.5px;top:569.8000000000001px;font-size:8.6px;line-height:10px;-webkit-text-stroke:0.25px currentColor;">M</div>
<div class="ab" style="left:374.9px;top:570.7px;width:69.7px;height:5.2px;background:linear-gradient(to right,#0e3416,#000 85%)"></div>
<svg class="ab" style="left:431.2px;top:576.0000000000001px" width="9" height="6.5" viewBox="0 0 9 6.5"><path d="M0.6 6 V3.5 L4.5 0.5 L8.4 3.5 V6z" fill="#a4a8b0" stroke="#6a6a70" stroke-width="0.8"/></svg>
<div class="fld" style="left:449.4px;top:567.8000000000001px;width:35.4px;height:13.2px"></div>
<div class="t" style="left:469.2px;top:568.1px;font-size:10.8px;line-height:13px;-webkit-text-stroke:0.1px currentColor;letter-spacing:0.78px;">88</div>
<div class="t" style="left:485.5px;top:569.8000000000001px;font-size:7px;line-height:9px;-webkit-text-stroke:0px currentColor;color:#555">%</div>
<div class="t" style="left:360.5px;top:584.4000000000001px;font-size:8.6px;line-height:10px;-webkit-text-stroke:0.25px currentColor;">Y</div>
<div class="ab" style="left:374.9px;top:585.3000000000001px;width:69.7px;height:5.2px;background:linear-gradient(to right,#0c0c36,#000 85%)"></div>
<svg class="ab" style="left:431.9px;top:590.6000000000001px" width="9" height="6.5" viewBox="0 0 9 6.5"><path d="M0.6 6 V3.5 L4.5 0.5 L8.4 3.5 V6z" fill="#a4a8b0" stroke="#6a6a70" stroke-width="0.8"/></svg>
<div class="fld" style="left:449.4px;top:582.4000000000001px;width:35.4px;height:13.2px"></div>
<div class="t" style="left:469.2px;top:582.7px;font-size:10.8px;line-height:13px;-webkit-text-stroke:0.1px currentColor;letter-spacing:0.78px;">89</div>
<div class="t" style="left:485.5px;top:584.4000000000001px;font-size:7px;line-height:9px;-webkit-text-stroke:0px currentColor;color:#555">%</div>
<div class="t" style="left:360.5px;top:599.0px;font-size:8.6px;line-height:10px;-webkit-text-stroke:0.25px currentColor;">K</div>
<div class="ab" style="left:374.9px;top:599.9px;width:69.7px;height:5.2px;background:linear-gradient(to right,#203030,#000 85%)"></div>
<svg class="ab" style="left:426.1px;top:605.2px" width="9" height="6.5" viewBox="0 0 9 6.5"><path d="M0.6 6 V3.5 L4.5 0.5 L8.4 3.5 V6z" fill="#a4a8b0" stroke="#6a6a70" stroke-width="0.8"/></svg>
<div class="fld" style="left:449.4px;top:597.0px;width:35.4px;height:13.2px"></div>
<div class="t" style="left:469.2px;top:597.3px;font-size:10.8px;line-height:13px;-webkit-text-stroke:0.1px currentColor;letter-spacing:0.78px;">80</div>
<div class="t" style="left:485.5px;top:599.0px;font-size:7px;line-height:9px;-webkit-text-stroke:0px currentColor;color:#555">%</div>
<div class="ab" style="left:328.4px;top:615.1px;width:168px;height:14.5px;border:1px solid #9a9a9a;background:linear-gradient(to bottom,rgba(255,255,255,.45),rgba(255,255,255,0) 45%,rgba(0,0,0,0) 55%,rgba(0,0,0,.45)),linear-gradient(to right,#6a0000 0%,#d80000 6%,#f08000 14%,#f4f000 22%,#60c000 32%,#00a040 40%,#20c0c0 50%,#40a0f0 55%,#2040c0 65%,#400090 72%,#a000a0 80%,#d00070 88%,#a00020 96%,#000 97%)"></div>
<div class="ab pin" style="left:325.4px;top:633px;width:175px;height:264px"></div>
<div class="circ" style="left:328.9px;top:634.8px"></div>
<div class="circ" style="left:340.09999999999997px;top:634.8px"></div>
<div class="circ" style="left:351.29999999999995px;top:634.8px"></div>
<div class="ab" style="left:325.4px;top:644px;width:175px;height:1px;background:#a6a6a6"></div>
<div class="tabs" style="left:325.4px;top:643.8px;width:175px;height:13.4px"></div>
<div class="ab pin" style="left:328.9px;top:646.0999999999999px;width:46.900000000000034px;height:12.1px;border-left:1px solid #a8a8a8;border-top:1px solid #c8c8c8"></div>
<svg class="ab" style="left:375.3px;top:646.0999999999999px" width="11.648" height="12.1"><path d="M0 0 L9.648 12.1 L0 12.1z" fill="#f2f2f2"/><path d="M0.5 0 L10.148 12.1" stroke="#8a8a8a" stroke-width="1"/></svg>
<div class="t" style="left:333.8px;top:645.5px;font-size:8.49px;line-height:12.4px;-webkit-text-stroke:0.22px currentColor;letter-spacing:-0.81px;">ヒストリー</div>
<svg class="ab" style="left:424.0px;top:646.0999999999999px" width="11.648" height="12.1"><path d="M0.5 0 L10.148 12.1" stroke="#9a9a9a" stroke-width="1"/><path d="M1.5 0 L11.148 12.1" stroke="#dedede" stroke-width="0.8"/></svg>
<div class="t" style="left:383.6px;top:645.5px;font-size:8.53px;line-height:12.4px;-webkit-text-stroke:0.22px currentColor;letter-spacing:-0.76px;">アクション</div>
<div class="ab" style="left:488.5px;top:644.7px;width:12.5px;height:12.5px;border-radius:50%;background:radial-gradient(circle at 50% 40%,#fff,#dedede);border:1.3px solid #3a3a3a"></div>
<svg class="ab" style="left:492.9px;top:647.7px" width="5" height="6"><use href="#rt"/></svg>
<div class="ab" style="left:325.4px;top:657.2px;width:162.6px;height:28.5px;background:#fff;border-top:1px solid #9a9a9a"></div>
<div class="ab pin" style="left:325.4px;top:658.2px;width:18px;height:27.5px"></div>
<div class="ab" style="left:325.4px;top:685.5px;width:162.6px;height:2px;background:#2a2a2a"></div>
<div class="ab" style="left:343.4px;top:657.2px;width:1px;height:28.3px;background:#8a8a8a"></div>
<div class="ab" style="left:328.5px;top:664px;width:12.5px;height:13.5px;background:linear-gradient(#f8f8f8,#d8d8d8);border:1px solid #9a9a9a"></div>
<svg class="ab" style="left:329.5px;top:665px" width="11" height="12" viewBox="0 0 11 12"><path d="M1 10.5 C3 9 6 6 9.5 2 M2 5 C4 7 7 7 9 5.5" stroke="#333" stroke-width="1.1" fill="none"/><path d="M7.5 1 L10 1.5 L9.5 4" fill="none" stroke="#333" stroke-width="0.8"/></svg>
<svg class="ab" style="left:346.8px;top:661.6px" width="26.7" height="20.8" viewBox="0 0 27 21"><defs><filter id="hb"><feGaussianBlur stdDeviation="1.2"/></filter></defs><rect width="27" height="21" fill="#120303"/><g filter="url(#hb)"><rect x="0" y="5" width="6" height="12" fill="#d08020"/><circle cx="4" cy="14" r="3" fill="#f0b040"/><rect x="19" y="4" width="8" height="10" fill="#6a1010"/></g><circle cx="8" cy="8" r="1.2" fill="#fcc"/><circle cx="16" cy="7" r="1" fill="#f99"/><circle cx="9" cy="15" r="1.3" fill="#fee"/><rect x="0" y="17" width="27" height="4" fill="#0a0202"/></svg>
<div class="t" style="left:377.5px;top:666px;font-size:8.98px;line-height:12px;-webkit-text-stroke:0.2px currentColor;letter-spacing:-0.26px;">MB社入社案内_表紙裏イ...</div>
<div class="ab" style="left:325.4px;top:687.5px;width:162.6px;height:17.8px;background:#c3d7f6"></div>
<div class="ab pin" style="left:325.4px;top:687.5px;width:18.4px;height:17.8px;border-right:1px solid #6a6a6a;border-bottom:1px solid #3a3a3a"></div>
<div class="ab" style="left:328.5px;top:690px;width:12px;height:13px;border-left:1px solid #b8b8b8;border-top:1px solid #b8b8b8"></div>
<div class="ab" style="left:340.6px;top:691.3px;width:8px;height:10px;border-radius:50%;background:linear-gradient(#a8d0fa,#3f82de);border:1px solid #3566b0"></div>
<svg class="ab" style="left:351px;top:689px" width="14" height="15" viewBox="0 0 14 15"><path d="M1 1 H9 L11 3 V13 H1z" fill="#e4e4e4" stroke="#333" stroke-width="1.1"/><path d="M3 5 H9 M3 7.5 H9 M3 10 H8" stroke="#444"/><path d="M9 8.5 L13.5 12 L10.5 12.5 L9.2 14.5z" fill="#111"/></svg>
<div class="t" style="left:374.6px;top:691.5px;font-size:8.88px;line-height:12px;-webkit-text-stroke:0.2px currentColor;letter-spacing:-0.79px;">開く</div>
<div class="ab" style="left:488px;top:657.2px;width:12.4px;height:239.8px;background:linear-gradient(to right,#d8d8d8,#f8f8f8 45%,#fafafa 70%,#e8e8e8)"></div>
<div class="ab pin" style="left:495.7px;top:258.6px;width:408.4px;height:376.6px;border:1px solid #8a8a8a;border-top-color:#a0a0a0;border-radius:6px 6px 0 0;box-shadow:0 7px 13px rgba(0,0,0,.62),0 0 3px rgba(0,0,0,.3)"></div>
<div class="t" style="left:666px;top:261.2px;font-size:11.3px;line-height:14px;-webkit-text-stroke:0.25px currentColor;transform:scaleX(1.018);transform-origin:0 0;">トーンカーブ</div>
<div class="ab" style="left:496.7px;top:276.4px;width:406.4px;height:1px;background:#9c9c9c"></div>
<div class="ab" style="left:504.4px;top:294.7px;width:297.4px;height:306.5px;border:1px solid #a4a4a4;border-right-color:#c4c4c4;border-bottom-color:#cacaca"></div>
<div class="ab pin" style="left:518px;top:290px;width:178px;height:10px"></div>
<div class="t" style="left:532.3px;top:287.8px;font-size:11.6px;line-height:14px;-webkit-text-stroke:0.3px currentColor;transform:scaleX(0.854);transform-origin:0 0;">チャンネル:</div>
<div class="pop" style="left:590.5px;top:284.5px;width:94.3px;height:20.5px;border-radius:5px"><div class="ar" style="width:19px"></div></div>
<svg class="ab" style="left:672px;top:289px" width="8" height="12"><use href="#ud"/></svg>
<div class="t" style="left:597.8px;top:288.5px;font-size:10.4px;line-height:13px;-webkit-text-stroke:0.15px currentColor;letter-spacing:-0.62px;">RGB</div>
<div class="ab" style="left:536.8px;top:312.8px;width:9px;height:220px;background:linear-gradient(#fff,#000);border:1px solid #7a7a7a"></div>
<svg class="ab" style="left:550.5px;top:312px" width="222" height="222" viewBox="550.5 312 222 222">
<rect x="551.6" y="313" width="219.8" height="219.6" fill="#fff" stroke="#1a1a1a" stroke-width="1.3"/>
<g stroke="#1a1a1a" stroke-width="0.8" stroke-dasharray="1.2 1.2">
<path d="M607.3 313 V532.6 M661.8 313 V532.6 M715.5 313 V532.6 M551.6 368.7 H771.4 M551.6 422.4 H771.4 M551.6 476.9 H771.4"/>
</g>
<path d="M553.6 531.2 C558 525 561 521 564.7 519 C569 516 572 513.5 575.4 511.4 C580 508.5 584 507 586.4 504.5 C589 501 591 496 593.7 492.3 C598 485 602 481 607.6 478.9 C614 476 619 473.5 625 471.1 C631 468.5 636 466.5 640.9 464.4 C644 463 646 461 648.8 458.9 C658 450 667 439 676.3 426.7 C683 418 690 408 696.6 400.3 C702 394 707 390 712.3 385 C725 372 738 359 751.4 345.5 C758 338 764 331 769.1 323.2" fill="none" stroke="#222" stroke-width="1" stroke-dasharray="2 0.6"/>
<g fill="#d0d0d0" stroke="#111" stroke-width="0.9"><rect x="551.8000000000001" y="529.4000000000001" width="3.6" height="3.6"/><rect x="562.9000000000001" y="517.2" width="3.6" height="3.6"/><rect x="573.6" y="509.59999999999997" width="3.6" height="3.6"/><rect x="584.6" y="502.7" width="3.6" height="3.6"/><rect x="591.9000000000001" y="490.5" width="3.6" height="3.6"/><rect x="605.8000000000001" y="477.09999999999997" width="3.6" height="3.6"/><rect x="623.2" y="469.3" width="3.6" height="3.6"/><rect x="639.1" y="462.59999999999997" width="3.6" height="3.6"/><rect x="647.0" y="457.09999999999997" width="3.6" height="3.6"/><rect x="674.5" y="424.9" width="3.6" height="3.6"/><rect x="694.8000000000001" y="398.5" width="3.6" height="3.6"/><rect x="710.5" y="383.2" width="3.6" height="3.6"/><rect x="749.6" y="343.7" width="3.6" height="3.6"/><rect x="767.3000000000001" y="321.4" width="3.6" height="3.6"/></g></svg>
<div class="ab" style="left:551.6px;top:537.8px;width:219.6px;height:9.2px;background:linear-gradient(to right,#000,#fff);border:1px solid #7a7a7a"></div>
<div class="ab" style="left:654.6px;top:537.6px;width:13px;height:9.6px;background:#fff;border:1px solid #555"></div>
<svg class="ab" style="left:655.6px;top:538.8px" width="11" height="7"><path d="M4.8 0.5 L1 3.5 L4.8 6.5z" fill="none" stroke="#111" stroke-width="0.9"/><path d="M6.2 0.5 L10 3.5 L6.2 6.5z" fill="#111"/></svg>
<div class="t" style="left:514px;top:558.2px;font-size:10.6px;line-height:12px;-webkit-text-stroke:0.35px currentColor;transform:scaleX(1.026);transform-origin:0 0;">入力:</div>
<div class="t" style="left:514px;top:580.9px;font-size:10.6px;line-height:12px;-webkit-text-stroke:0.35px currentColor;transform:scaleX(1.026);transform-origin:0 0;">出力:</div>
<div class="ab" style="left:753px;top:566.5px;width:40.5px;height:17.5px;border:1px solid #8a8a8a;background:#fff"></div>
<div class="ab" style="left:754px;top:567.5px;width:20px;height:15.5px;background:linear-gradient(#6a6a6a,#8c8c8c)"></div>
<svg class="ab" style="left:756px;top:569px" width="16" height="11"><path d="M1 9.5 C4 1 7 1 8 5 C9 9 12 9 15 1.5" fill="none" stroke="#111" stroke-width="1.3"/></svg>
<svg class="ab" style="left:777.5px;top:568px" width="14" height="14"><path d="M2 12.5 L3 9 L10 2 L12 4 L5 11z" fill="#fff" stroke="#111" stroke-width="1.1"/></svg>
<div class="btn" style="left:817.4px;top:294.7px;width:77.9px;height:17.8px;background:linear-gradient(#b4d0f6,#6a9ee8 40%,#3a7ad8 55%,#78b0f0 85%,#b0dcff);border-color:#1a2f80;box-shadow:0 1px 2px rgba(0,0,0,.35)"></div>
<div class="t" style="left:848.9px;top:297.5px;font-size:10.82px;line-height:13px;-webkit-text-stroke:0.2px currentColor;letter-spacing:-0.52px;color:#0a1a3a">OK</div>
<div class="btn" style="left:817.4px;top:322.2px;width:77.9px;height:17.5px;"></div>
<div class="t" style="left:832.1px;top:324.5px;font-size:10.8px;line-height:13px;-webkit-text-stroke:0.3px currentColor;transform:scaleX(0.887);transform-origin:0 0;">キャンセル</div>
<div class="btn" style="left:817.4px;top:352.3px;width:77.9px;height:17.5px;"></div>
<div class="t" style="left:829.2px;top:354.6px;font-size:10.8px;line-height:13px;-webkit-text-stroke:0.3px currentColor;transform:scaleX(1.011);transform-origin:0 0;">読み込み...</div>
<div class="btn" style="left:817.4px;top:376px;width:77.9px;height:17.5px;"></div>
<div class="t" style="left:840.2px;top:378.3px;font-size:10.8px;line-height:13px;-webkit-text-stroke:0.3px currentColor;transform:scaleX(1.013);transform-origin:0 0;">保存...</div>
<div class="btn" style="left:817.4px;top:405.8px;width:77.9px;height:17.5px;border-color:#b4b4b4;"></div>
<div class="t" style="left:835.7px;top:408.1px;font-size:10.8px;line-height:13px;-webkit-text-stroke:0px currentColor;transform:scaleX(0.945);transform-origin:0 0;color:#a4a4a4">滑らかに</div>
<div class="btn" style="left:817.4px;top:436px;width:77.9px;height:17.5px;"></div>
<div class="t" style="left:835.7px;top:438.3px;font-size:10.8px;line-height:13px;-webkit-text-stroke:0.3px currentColor;transform:scaleX(0.945);transform-origin:0 0;">自動補正</div>
<div class="btn" style="left:817.4px;top:459.8px;width:77.9px;height:17.5px;"></div>
<div class="t" style="left:828px;top:462.1px;font-size:10.8px;line-height:13px;-webkit-text-stroke:0.3px currentColor;transform:scaleX(0.892);transform-origin:0 0;">オプション...</div>
<div class="ab" style="left:824px;top:491.3px;width:64px;height:17.6px;border:1px solid #8a8a8a;background:#fff"></div>
<div class="ab" style="left:824.8px;top:492px;width:20.4px;height:16.2px;background:linear-gradient(#fdfdfd,#e0e0e0);border-right:1px solid #a8a8a8"></div>
<svg class="ab" style="left:828.3px;top:493px" width="14" height="14" viewBox="0 0 14 14"><path d="M1.5 12.5 L8 6" stroke="#111" stroke-width="2"/><path d="M2.4 11.6 L7.4 6.6" stroke="#111" stroke-width="0.8"/><path d="M7.5 3.5 L10.5 0.8 L13.2 3.5 L10.5 6.5z" fill="#111"/><path d="M6.8 4.5 L9.5 7.2" stroke="#111" stroke-width="1.3"/></svg>
<div class="ab" style="left:845.9px;top:492px;width:20.4px;height:16.2px;background:linear-gradient(#fdfdfd,#e0e0e0);border-right:1px solid #a8a8a8"></div>
<svg class="ab" style="left:849.4px;top:493px" width="14" height="14" viewBox="0 0 14 14"><path d="M1.5 12.5 L8 6" stroke="#111" stroke-width="2"/><path d="M2.4 11.6 L7.4 6.6" stroke="#8a8a8a" stroke-width="0.8"/><path d="M7.5 3.5 L10.5 0.8 L13.2 3.5 L10.5 6.5z" fill="#111"/><path d="M6.8 4.5 L9.5 7.2" stroke="#111" stroke-width="1.3"/></svg>
<div class="ab" style="left:867.0px;top:492px;width:20.4px;height:16.2px;background:linear-gradient(#fdfdfd,#e0e0e0);border-right:1px solid #a8a8a8"></div>
<svg class="ab" style="left:870.5px;top:493px" width="14" height="14" viewBox="0 0 14 14"><path d="M1.5 12.5 L8 6" stroke="#111" stroke-width="2"/><path d="M2.4 11.6 L7.4 6.6" stroke="#fff" stroke-width="0.8"/><path d="M7.5 3.5 L10.5 0.8 L13.2 3.5 L10.5 6.5z" fill="#111"/><path d="M6.8 4.5 L9.5 7.2" stroke="#111" stroke-width="1.3"/></svg>
<div class="ab" style="left:818px;top:521.7px;width:11.5px;height:12.5px;border:1px solid #3a5a9a;border-radius:2px;background:linear-gradient(#c0dcfc,#5a9ae8 50%,#a0d0fa)"></div>
<svg class="ab" style="left:818.5px;top:520.5px" width="13" height="13"><path d="M2.5 6.5 L5.2 10.2 L11.5 1.5" fill="none" stroke="#111" stroke-width="1.9"/></svg>
<div class="t" style="left:833px;top:521.8px;font-size:11.2px;line-height:13px;-webkit-text-stroke:0.3px currentColor;transform:scaleX(0.884);transform-origin:0 0;">プレビュー</div>
<div class="ab" style="left:879.4px;top:614.4px;width:19.7px;height:17.4px;border:1px solid #8a8a8a;background:linear-gradient(#fdfdfd,#e4e4e4)"></div>
<svg class="ab" style="left:882px;top:616.5px" width="14" height="13" viewBox="0 0 14 13"><rect x="1" y="1" width="9" height="7.5" rx="1" fill="#ddd" stroke="#222" stroke-width="1.2"/><rect x="7.5" y="6.5" width="5.5" height="5.5" fill="#fff" stroke="#222" stroke-width="1"/><path d="M2.5 2.5 L6 5.5" stroke="#111" stroke-width="1.2"/><path d="M2.2 2.2 L4.5 2.2 L2.2 4.5z" fill="#111"/></svg>
</body></html>
